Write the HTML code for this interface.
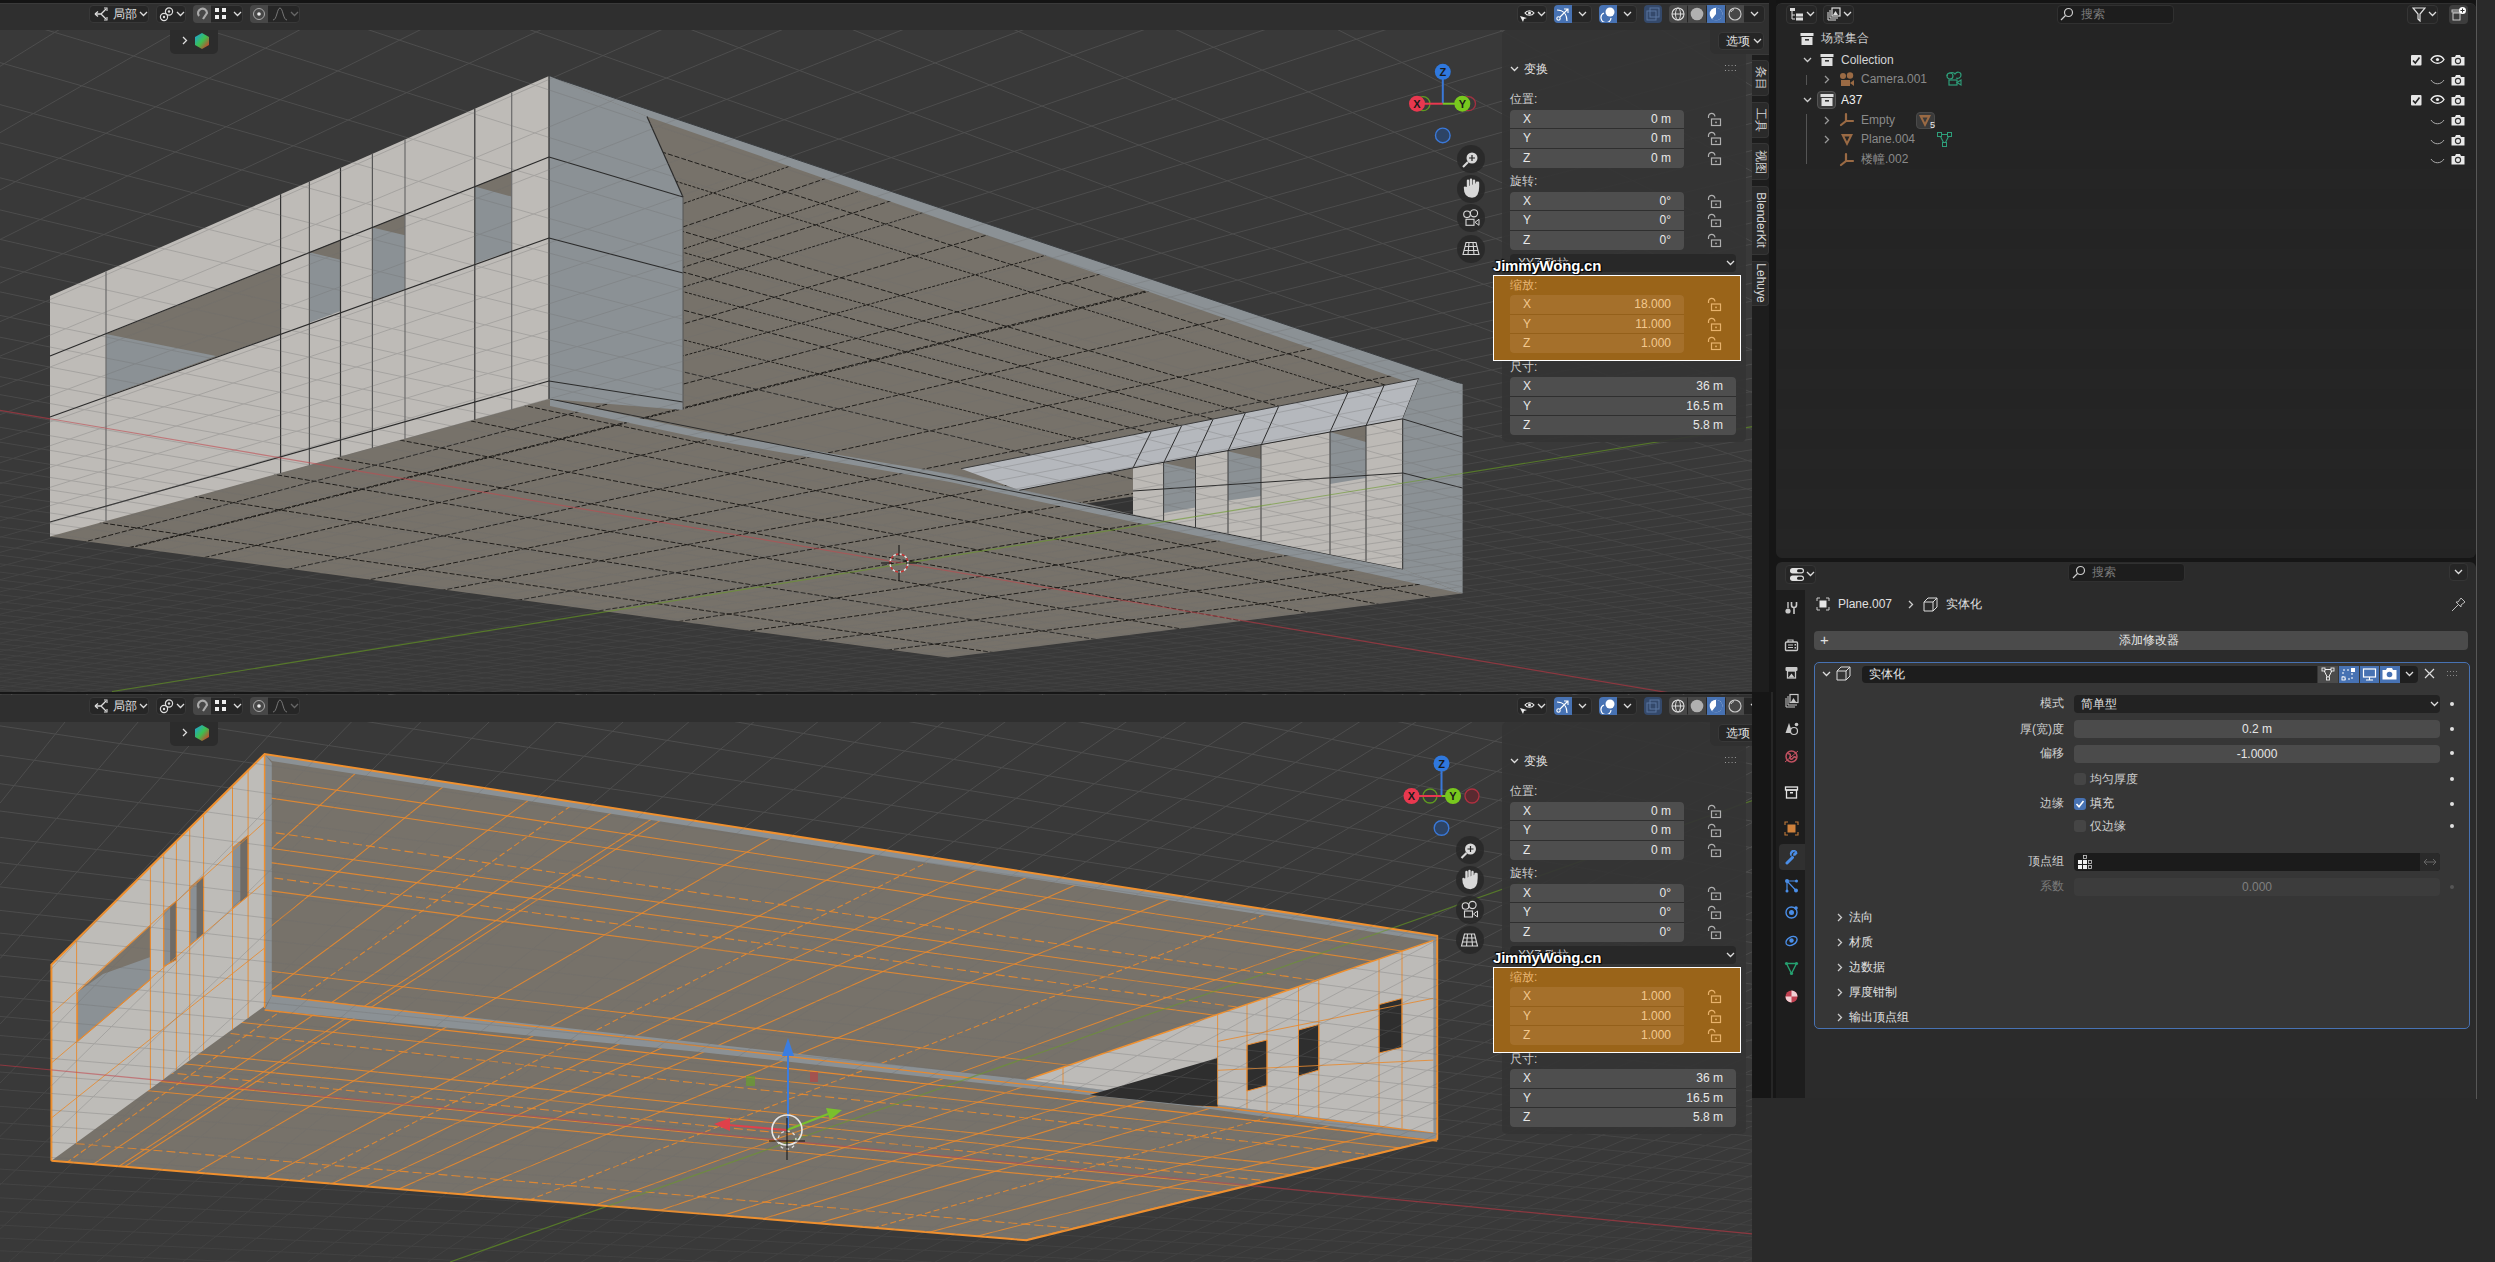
<!DOCTYPE html>
<html><head><meta charset="utf-8"><style>*{margin:0;padding:0;box-sizing:border-box}
html,body{width:2495px;height:1262px;overflow:hidden;background:#161616}
body{font-family:"Liberation Sans",sans-serif;color:#ddd;font-size:12px}
#root{position:relative;width:2495px;height:1262px;overflow:hidden}
#vtop{position:absolute;left:0;top:0;width:1771px;height:692px;overflow:hidden;border-top-right-radius:6px}
#vbot{position:absolute;left:0;top:694px;width:1752px;height:568px;overflow:hidden}
.abs{position:absolute}
.t{white-space:nowrap}
</style></head>
<body><div id="root">
<div id="vtop"><svg width="1771" height="692" viewBox="0 0 1771 692" style="position:absolute;left:0;top:0">
<defs><clipPath id="floorclipT"><polygon points="549,77 1462,384 1462,593.5 948,657.5 50,536.5"/></clipPath><clipPath id="mclipT"><polygon points="50,296 549,76 1462,384 1462,593.5 948,657.5 50,536.5"/></clipPath><linearGradient id="fadeT" x1="0" y1="0" x2="0" y2="692" gradientUnits="userSpaceOnUse"><stop offset="0" stop-color="#fff" stop-opacity="1"/><stop offset="0.45" stop-color="#fff" stop-opacity="0.9"/><stop offset="1" stop-color="#fff" stop-opacity="0.35"/></linearGradient><mask id="maskT"><rect width="1771" height="692" fill="url(#fadeT)"/></mask></defs>
<rect width="1771" height="692" fill="#393939"/>
<g mask="url(#maskT)"><line x1="106.9" y1="0.0" x2="0.0" y2="66.3" stroke="#4e4e4e" stroke-width="1" />
<line x1="231.3" y1="0.0" x2="0.0" y2="132.7" stroke="#4e4e4e" stroke-width="1" />
<line x1="355.6" y1="0.0" x2="0.0" y2="189.9" stroke="#4e4e4e" stroke-width="1" />
<line x1="480.0" y1="0.0" x2="0.0" y2="239.5" stroke="#4e4e4e" stroke-width="1" />
<line x1="604.4" y1="0.0" x2="0.0" y2="283.2" stroke="#4e4e4e" stroke-width="1" />
<line x1="728.9" y1="0.0" x2="0.0" y2="321.7" stroke="#4e4e4e" stroke-width="1" />
<line x1="853.3" y1="0.0" x2="0.0" y2="356.1" stroke="#4e4e4e" stroke-width="1" />
<line x1="977.8" y1="0.0" x2="0.0" y2="386.9" stroke="#4e4e4e" stroke-width="1" />
<line x1="1102.4" y1="0.0" x2="0.0" y2="414.7" stroke="#4e4e4e" stroke-width="1" />
<line x1="1226.9" y1="0.0" x2="0.0" y2="439.9" stroke="#4e4e4e" stroke-width="1" />
<line x1="1351.5" y1="0.0" x2="0.0" y2="462.9" stroke="#4e4e4e" stroke-width="1" />
<line x1="1476.1" y1="0.0" x2="0.0" y2="483.8" stroke="#4e4e4e" stroke-width="1" />
<line x1="1600.8" y1="0.0" x2="0.0" y2="503.1" stroke="#4e4e4e" stroke-width="1" />
<line x1="1725.4" y1="0.0" x2="0.0" y2="520.8" stroke="#4e4e4e" stroke-width="1" />
<line x1="1771.0" y1="23.0" x2="0.0" y2="537.2" stroke="#4e4e4e" stroke-width="1" />
<line x1="1771.0" y1="57.0" x2="0.0" y2="552.4" stroke="#4e4e4e" stroke-width="1" />
<line x1="1771.0" y1="88.7" x2="0.0" y2="566.5" stroke="#4e4e4e" stroke-width="1" />
<line x1="1771.0" y1="118.2" x2="0.0" y2="579.7" stroke="#4e4e4e" stroke-width="1" />
<line x1="1771.0" y1="145.7" x2="0.0" y2="591.9" stroke="#4e4e4e" stroke-width="1" />
<line x1="1771.0" y1="171.5" x2="0.0" y2="603.4" stroke="#4e4e4e" stroke-width="1" />
<line x1="1771.0" y1="195.7" x2="0.0" y2="614.2" stroke="#4e4e4e" stroke-width="1" />
<line x1="1771.0" y1="218.4" x2="0.0" y2="624.4" stroke="#4e4e4e" stroke-width="1" />
<line x1="1771.0" y1="239.8" x2="0.0" y2="633.9" stroke="#4e4e4e" stroke-width="1" />
<line x1="1771.0" y1="260.0" x2="0.0" y2="643.0" stroke="#4e4e4e" stroke-width="1" />
<line x1="1771.0" y1="279.1" x2="0.0" y2="651.5" stroke="#4e4e4e" stroke-width="1" />
<line x1="1771.0" y1="297.2" x2="0.0" y2="659.5" stroke="#4e4e4e" stroke-width="1" />
<line x1="1771.0" y1="314.3" x2="0.0" y2="667.2" stroke="#4e4e4e" stroke-width="1" />
<line x1="1771.0" y1="330.6" x2="0.0" y2="674.4" stroke="#4e4e4e" stroke-width="1" />
<line x1="1771.0" y1="346.0" x2="0.0" y2="681.3" stroke="#4e4e4e" stroke-width="1" />
<line x1="1771.0" y1="360.7" x2="0.0" y2="687.9" stroke="#4e4e4e" stroke-width="1" />
<line x1="1771.0" y1="374.8" x2="11.8" y2="692.0" stroke="#4e4e4e" stroke-width="1" />
<line x1="1771.0" y1="388.1" x2="45.9" y2="692.0" stroke="#4e4e4e" stroke-width="1" />
<line x1="1771.0" y1="400.9" x2="80.1" y2="692.0" stroke="#4e4e4e" stroke-width="1" />
<line x1="1771.0" y1="413.1" x2="114.2" y2="692.0" stroke="#4e4e4e" stroke-width="1" />
<line x1="1771.0" y1="424.8" x2="148.3" y2="692.0" stroke="#4e4e4e" stroke-width="1" />
<line x1="1771.0" y1="435.9" x2="182.5" y2="692.0" stroke="#4e4e4e" stroke-width="1" />
<line x1="1771.0" y1="446.7" x2="216.7" y2="692.0" stroke="#4e4e4e" stroke-width="1" />
<line x1="1771.0" y1="456.9" x2="250.8" y2="692.0" stroke="#4e4e4e" stroke-width="1" />
<line x1="1771.0" y1="466.8" x2="285.0" y2="692.0" stroke="#4e4e4e" stroke-width="1" />
<line x1="1771.0" y1="476.3" x2="319.2" y2="692.0" stroke="#4e4e4e" stroke-width="1" />
<line x1="1771.0" y1="485.4" x2="353.4" y2="692.0" stroke="#4e4e4e" stroke-width="1" />
<line x1="1771.0" y1="494.2" x2="387.6" y2="692.0" stroke="#4e4e4e" stroke-width="1" />
<line x1="1771.0" y1="502.7" x2="421.8" y2="692.0" stroke="#4e4e4e" stroke-width="1" />
<line x1="1771.0" y1="510.8" x2="456.0" y2="692.0" stroke="#4e4e4e" stroke-width="1" />
<line x1="1771.0" y1="518.7" x2="490.3" y2="692.0" stroke="#4e4e4e" stroke-width="1" />
<line x1="1771.0" y1="526.3" x2="524.5" y2="692.0" stroke="#4e4e4e" stroke-width="1" />
<line x1="1771.0" y1="533.6" x2="558.7" y2="692.0" stroke="#4e4e4e" stroke-width="1" />
<line x1="1771.0" y1="540.7" x2="593.0" y2="692.0" stroke="#4e4e4e" stroke-width="1" />
<line x1="1771.0" y1="547.6" x2="627.2" y2="692.0" stroke="#4e4e4e" stroke-width="1" />
<line x1="1771.0" y1="554.2" x2="661.5" y2="692.0" stroke="#4e4e4e" stroke-width="1" />
<line x1="1771.0" y1="560.6" x2="695.8" y2="692.0" stroke="#4e4e4e" stroke-width="1" />
<line x1="1771.0" y1="566.8" x2="730.0" y2="692.0" stroke="#4e4e4e" stroke-width="1" />
<line x1="1771.0" y1="572.8" x2="764.3" y2="692.0" stroke="#4e4e4e" stroke-width="1" />
<line x1="1771.0" y1="578.7" x2="798.6" y2="692.0" stroke="#4e4e4e" stroke-width="1" />
<line x1="1771.0" y1="584.3" x2="832.9" y2="692.0" stroke="#4e4e4e" stroke-width="1" />
<line x1="1771.0" y1="589.8" x2="867.2" y2="692.0" stroke="#4e4e4e" stroke-width="1" />
<line x1="1771.0" y1="595.1" x2="901.6" y2="692.0" stroke="#4e4e4e" stroke-width="1" />
<line x1="1771.0" y1="600.3" x2="935.9" y2="692.0" stroke="#4e4e4e" stroke-width="1" />
<line x1="1771.0" y1="605.3" x2="970.2" y2="692.0" stroke="#4e4e4e" stroke-width="1" />
<line x1="1771.0" y1="610.2" x2="1004.6" y2="692.0" stroke="#4e4e4e" stroke-width="1" />
<line x1="1771.0" y1="615.0" x2="1038.9" y2="692.0" stroke="#4e4e4e" stroke-width="1" />
<line x1="1771.0" y1="619.6" x2="1073.3" y2="692.0" stroke="#4e4e4e" stroke-width="1" />
<line x1="1771.0" y1="624.1" x2="1107.6" y2="692.0" stroke="#4e4e4e" stroke-width="1" />
<line x1="1771.0" y1="628.5" x2="1142.0" y2="692.0" stroke="#4e4e4e" stroke-width="1" />
<line x1="1771.0" y1="632.8" x2="1176.4" y2="692.0" stroke="#4e4e4e" stroke-width="1" />
<line x1="1771.0" y1="636.9" x2="1210.8" y2="692.0" stroke="#4e4e4e" stroke-width="1" />
<line x1="1771.0" y1="641.0" x2="1245.2" y2="692.0" stroke="#4e4e4e" stroke-width="1" />
<line x1="1771.0" y1="644.9" x2="1279.6" y2="692.0" stroke="#4e4e4e" stroke-width="1" />
<line x1="1771.0" y1="648.7" x2="1314.0" y2="692.0" stroke="#4e4e4e" stroke-width="1" />
<line x1="1771.0" y1="652.5" x2="1348.4" y2="692.0" stroke="#4e4e4e" stroke-width="1" />
<line x1="1771.0" y1="656.2" x2="1382.8" y2="692.0" stroke="#4e4e4e" stroke-width="1" />
<line x1="1771.0" y1="659.7" x2="1417.3" y2="692.0" stroke="#4e4e4e" stroke-width="1" />
<line x1="1771.0" y1="663.2" x2="1451.7" y2="692.0" stroke="#4e4e4e" stroke-width="1" />
<line x1="1771.0" y1="666.6" x2="1486.2" y2="692.0" stroke="#4e4e4e" stroke-width="1" />
<line x1="1771.0" y1="670.0" x2="1520.6" y2="692.0" stroke="#4e4e4e" stroke-width="1" />
<line x1="1771.0" y1="673.2" x2="1555.1" y2="692.0" stroke="#4e4e4e" stroke-width="1" />
<line x1="1771.0" y1="676.4" x2="1589.6" y2="692.0" stroke="#4e4e4e" stroke-width="1" />
<line x1="1771.0" y1="679.5" x2="1624.1" y2="692.0" stroke="#4e4e4e" stroke-width="1" />
<line x1="1771.0" y1="682.5" x2="1658.6" y2="692.0" stroke="#4e4e4e" stroke-width="1" />
<line x1="1771.0" y1="685.5" x2="1693.1" y2="692.0" stroke="#4e4e4e" stroke-width="1" />
<line x1="1771.0" y1="688.4" x2="1727.6" y2="692.0" stroke="#4e4e4e" stroke-width="1" />
<line x1="1771.0" y1="691.3" x2="1762.1" y2="692.0" stroke="#4e4e4e" stroke-width="1" />
<line x1="1613.8" y1="0.0" x2="1771.0" y2="98.0" stroke="#4e4e4e" stroke-width="1" />
<line x1="1446.8" y1="0.0" x2="1771.0" y2="182.2" stroke="#4e4e4e" stroke-width="1" />
<line x1="1279.8" y1="0.0" x2="1771.0" y2="251.4" stroke="#4e4e4e" stroke-width="1" />
<line x1="1112.9" y1="0.0" x2="1771.0" y2="309.2" stroke="#4e4e4e" stroke-width="1" />
<line x1="946.0" y1="0.0" x2="1771.0" y2="358.2" stroke="#4e4e4e" stroke-width="1" />
<line x1="779.2" y1="0.0" x2="1771.0" y2="400.2" stroke="#4e4e4e" stroke-width="1" />
<line x1="612.5" y1="0.0" x2="1771.0" y2="436.8" stroke="#4e4e4e" stroke-width="1" />
<line x1="445.8" y1="0.0" x2="1771.0" y2="468.8" stroke="#4e4e4e" stroke-width="1" />
<line x1="279.1" y1="0.0" x2="1771.0" y2="497.1" stroke="#4e4e4e" stroke-width="1" />
<line x1="112.5" y1="0.0" x2="1771.0" y2="522.2" stroke="#4e4e4e" stroke-width="1" />
<line x1="0.0" y1="16.1" x2="1771.0" y2="544.8" stroke="#4e4e4e" stroke-width="1" />
<line x1="0.0" y1="62.6" x2="1771.0" y2="565.1" stroke="#4e4e4e" stroke-width="1" />
<line x1="0.0" y1="104.6" x2="1771.0" y2="583.4" stroke="#4e4e4e" stroke-width="1" />
<line x1="0.0" y1="142.9" x2="1771.0" y2="600.2" stroke="#4e4e4e" stroke-width="1" />
<line x1="0.0" y1="177.8" x2="1771.0" y2="615.5" stroke="#4e4e4e" stroke-width="1" />
<line x1="0.0" y1="209.9" x2="1771.0" y2="629.5" stroke="#4e4e4e" stroke-width="1" />
<line x1="0.0" y1="239.4" x2="1771.0" y2="642.4" stroke="#4e4e4e" stroke-width="1" />
<line x1="0.0" y1="266.7" x2="1771.0" y2="654.3" stroke="#4e4e4e" stroke-width="1" />
<line x1="0.0" y1="291.9" x2="1771.0" y2="665.3" stroke="#4e4e4e" stroke-width="1" />
<line x1="0.0" y1="315.4" x2="1771.0" y2="675.6" stroke="#4e4e4e" stroke-width="1" />
<line x1="0.0" y1="337.2" x2="1771.0" y2="685.1" stroke="#4e4e4e" stroke-width="1" />
<line x1="0.0" y1="357.6" x2="1760.2" y2="692.0" stroke="#4e4e4e" stroke-width="1" />
<line x1="0.0" y1="376.7" x2="1714.5" y2="692.0" stroke="#4e4e4e" stroke-width="1" />
<line x1="0.0" y1="394.6" x2="1668.8" y2="692.0" stroke="#4e4e4e" stroke-width="1" />
<line x1="0.0" y1="411.5" x2="1623.0" y2="692.0" stroke="#4e4e4e" stroke-width="1" />
<line x1="0.0" y1="427.3" x2="1577.3" y2="692.0" stroke="#4e4e4e" stroke-width="1" />
<line x1="0.0" y1="442.2" x2="1531.7" y2="692.0" stroke="#4e4e4e" stroke-width="1" />
<line x1="0.0" y1="456.4" x2="1486.0" y2="692.0" stroke="#4e4e4e" stroke-width="1" />
<line x1="0.0" y1="469.7" x2="1440.3" y2="692.0" stroke="#4e4e4e" stroke-width="1" />
<line x1="0.0" y1="482.4" x2="1394.7" y2="692.0" stroke="#4e4e4e" stroke-width="1" />
<line x1="0.0" y1="494.4" x2="1349.1" y2="692.0" stroke="#4e4e4e" stroke-width="1" />
<line x1="0.0" y1="505.8" x2="1303.5" y2="692.0" stroke="#4e4e4e" stroke-width="1" />
<line x1="0.0" y1="516.6" x2="1257.9" y2="692.0" stroke="#4e4e4e" stroke-width="1" />
<line x1="0.0" y1="527.0" x2="1212.3" y2="692.0" stroke="#4e4e4e" stroke-width="1" />
<line x1="0.0" y1="536.8" x2="1166.7" y2="692.0" stroke="#4e4e4e" stroke-width="1" />
<line x1="0.0" y1="546.2" x2="1121.1" y2="692.0" stroke="#4e4e4e" stroke-width="1" />
<line x1="0.0" y1="555.2" x2="1075.6" y2="692.0" stroke="#4e4e4e" stroke-width="1" />
<line x1="0.0" y1="563.8" x2="1030.1" y2="692.0" stroke="#4e4e4e" stroke-width="1" />
<line x1="0.0" y1="572.1" x2="984.5" y2="692.0" stroke="#4e4e4e" stroke-width="1" />
<line x1="0.0" y1="580.0" x2="939.0" y2="692.0" stroke="#4e4e4e" stroke-width="1" />
<line x1="0.0" y1="587.6" x2="893.5" y2="692.0" stroke="#4e4e4e" stroke-width="1" />
<line x1="0.0" y1="594.8" x2="848.1" y2="692.0" stroke="#4e4e4e" stroke-width="1" />
<line x1="0.0" y1="601.8" x2="802.6" y2="692.0" stroke="#4e4e4e" stroke-width="1" />
<line x1="0.0" y1="608.6" x2="757.1" y2="692.0" stroke="#4e4e4e" stroke-width="1" />
<line x1="0.0" y1="615.0" x2="711.7" y2="692.0" stroke="#4e4e4e" stroke-width="1" />
<line x1="0.0" y1="621.3" x2="666.3" y2="692.0" stroke="#4e4e4e" stroke-width="1" />
<line x1="0.0" y1="627.3" x2="620.9" y2="692.0" stroke="#4e4e4e" stroke-width="1" />
<line x1="0.0" y1="633.1" x2="575.5" y2="692.0" stroke="#4e4e4e" stroke-width="1" />
<line x1="0.0" y1="638.7" x2="530.1" y2="692.0" stroke="#4e4e4e" stroke-width="1" />
<line x1="0.0" y1="644.0" x2="484.7" y2="692.0" stroke="#4e4e4e" stroke-width="1" />
<line x1="0.0" y1="649.3" x2="439.4" y2="692.0" stroke="#4e4e4e" stroke-width="1" />
<line x1="0.0" y1="654.3" x2="394.0" y2="692.0" stroke="#4e4e4e" stroke-width="1" />
<line x1="0.0" y1="659.2" x2="348.7" y2="692.0" stroke="#4e4e4e" stroke-width="1" />
<line x1="0.0" y1="663.9" x2="303.4" y2="692.0" stroke="#4e4e4e" stroke-width="1" />
<line x1="0.0" y1="668.5" x2="258.1" y2="692.0" stroke="#4e4e4e" stroke-width="1" />
<line x1="0.0" y1="672.9" x2="212.8" y2="692.0" stroke="#4e4e4e" stroke-width="1" />
<line x1="0.0" y1="677.2" x2="167.5" y2="692.0" stroke="#4e4e4e" stroke-width="1" />
<line x1="0.0" y1="681.4" x2="122.3" y2="692.0" stroke="#4e4e4e" stroke-width="1" />
<line x1="0.0" y1="685.4" x2="77.0" y2="692.0" stroke="#4e4e4e" stroke-width="1" />
<line x1="0.0" y1="689.3" x2="31.8" y2="692.0" stroke="#4e4e4e" stroke-width="1" /></g>
<line x1="0.0" y1="410.3" x2="1771.0" y2="710.1" stroke="#8c3840" stroke-width="1.2" />
<line x1="112.0" y1="691.5" x2="1771.0" y2="423.6" stroke="#56782a" stroke-width="1.2" />
<polygon points="549.0,77.0 1462.0,384.0 1462.0,593.5 948.0,657.5 50.0,536.5" fill="#77726a" />
<g clip-path="url(#floorclipT)" fill="none">
<line x1="1752.0" y1="503.3" x2="190.2" y2="0.0" stroke="#1f1d1a" stroke-width="1" stroke-dasharray="5 2"/>
<line x1="1752.0" y1="517.6" x2="95.8" y2="0.0" stroke="#1f1d1a" stroke-width="1" stroke-dasharray="3 1.5"/>
<line x1="1752.0" y1="545.3" x2="0.0" y2="30.9" stroke="#1f1d1a" stroke-width="1" stroke-dasharray="5 2"/>
<line x1="1752.0" y1="557.4" x2="0.0" y2="57.4" stroke="#1f1d1a" stroke-width="1" stroke-dasharray="3 1.5"/>
<line x1="1752.0" y1="568.8" x2="0.0" y2="82.4" stroke="#1f1d1a" stroke-width="1" stroke-dasharray="5 2"/>
<line x1="1752.0" y1="580.1" x2="0.0" y2="107.3" stroke="#1f1d1a" stroke-width="1" stroke-dasharray="3 1.5"/>
<line x1="1752.0" y1="590.8" x2="0.0" y2="130.7" stroke="#1f1d1a" stroke-width="1" stroke-dasharray="5 2"/>
<line x1="1752.0" y1="608.0" x2="0.0" y2="168.5" stroke="#1f1d1a" stroke-width="1" stroke-dasharray="3 1.5"/>
<line x1="1752.0" y1="626.5" x2="0.0" y2="209.1" stroke="#1f1d1a" stroke-width="1" stroke-dasharray="5 2"/>
<line x1="1265.0" y1="692.0" x2="0.0" y2="508.1" stroke="#1f1d1a" stroke-width="1" stroke-dasharray="5 2"/>
<line x1="1427.8" y1="692.0" x2="0.0" y2="465.6" stroke="#1f1d1a" stroke-width="1" stroke-dasharray="5 2"/>
<line x1="1551.8" y1="692.0" x2="0.0" y2="427.7" stroke="#1f1d1a" stroke-width="1" stroke-dasharray="5 2"/>
<line x1="1637.8" y1="692.0" x2="0.0" y2="397.8" stroke="#1f1d1a" stroke-width="1" stroke-dasharray="5 2"/>
<line x1="1725.1" y1="692.0" x2="0.0" y2="364.1" stroke="#1f1d1a" stroke-width="1" stroke-dasharray="5 2"/>
<line x1="1752.0" y1="679.7" x2="0.0" y2="325.9" stroke="#1f1d1a" stroke-width="1" stroke-dasharray="5 2"/>
<line x1="1752.0" y1="665.4" x2="0.0" y2="294.5" stroke="#1f1d1a" stroke-width="1" stroke-dasharray="5 2"/>
<line x1="0.0" y1="443.2" x2="1263.6" y2="0.0" stroke="#1f1d1a" stroke-width="1" stroke-dasharray="3 1.5"/>
<line x1="0.0" y1="458.8" x2="1351.4" y2="0.0" stroke="#1f1d1a" stroke-width="1" stroke-dasharray="5 2"/>
<line x1="0.0" y1="473.6" x2="1440.2" y2="0.0" stroke="#1f1d1a" stroke-width="1" stroke-dasharray="3 1.5"/>
<line x1="0.0" y1="485.9" x2="1518.7" y2="0.0" stroke="#1f1d1a" stroke-width="1" stroke-dasharray="5 2"/>
<line x1="0.0" y1="499.1" x2="1607.7" y2="0.0" stroke="#1f1d1a" stroke-width="1" stroke-dasharray="3 1.5"/>
<line x1="0.0" y1="523.9" x2="1752.0" y2="11.1" stroke="#1f1d1a" stroke-width="1" stroke-dasharray="5 2"/>
<line x1="0.0" y1="545.3" x2="1752.0" y2="59.4" stroke="#1f1d1a" stroke-width="1" stroke-dasharray="3 1.5"/>
<line x1="0.0" y1="564.2" x2="1752.0" y2="102.3" stroke="#1f1d1a" stroke-width="1" stroke-dasharray="5 2"/>
<line x1="0.0" y1="580.7" x2="1752.0" y2="139.4" stroke="#1f1d1a" stroke-width="1" stroke-dasharray="3 1.5"/>
<line x1="0.0" y1="580.1" x2="1752.0" y2="138.1" stroke="#1f1d1a" stroke-width="1" stroke-dasharray="5 2"/>
<line x1="0.0" y1="605.4" x2="1752.0" y2="195.2" stroke="#1f1d1a" stroke-width="1" stroke-dasharray="5 2"/>
<line x1="0.0" y1="631.3" x2="1752.0" y2="253.8" stroke="#1f1d1a" stroke-width="1" stroke-dasharray="5 2"/>
<line x1="0.0" y1="653.4" x2="1752.0" y2="303.8" stroke="#1f1d1a" stroke-width="1" stroke-dasharray="5 2"/>
<line x1="0.0" y1="672.4" x2="1752.0" y2="346.7" stroke="#1f1d1a" stroke-width="1" stroke-dasharray="5 2"/>
<line x1="0.0" y1="689.9" x2="1752.0" y2="386.3" stroke="#1f1d1a" stroke-width="1" stroke-dasharray="5 2"/>
<line x1="94.1" y1="692.0" x2="1752.0" y2="425.2" stroke="#1f1d1a" stroke-width="1" stroke-dasharray="5 2"/>
<line x1="207.5" y1="692.0" x2="1752.0" y2="461.1" stroke="#1f1d1a" stroke-width="1" stroke-dasharray="5 2"/>
<line x1="313.5" y1="692.0" x2="1752.0" y2="490.3" stroke="#1f1d1a" stroke-width="1" stroke-dasharray="5 2"/>
<line x1="426.3" y1="692.0" x2="1752.0" y2="517.6" stroke="#1f1d1a" stroke-width="1" stroke-dasharray="5 2"/>
<line x1="546.6" y1="692.0" x2="1752.0" y2="543.3" stroke="#1f1d1a" stroke-width="1" stroke-dasharray="5 2"/>
</g>
<polygon points="549.0,76.0 1462.0,384.0 1462.0,391.0 1419.0,386.0 647.0,116.5" fill="#8b9195" />
<line x1="549.0" y1="76.0" x2="1462.0" y2="384.0" stroke="#3a3d40" stroke-width="1" />
<polygon points="550.0,399.0 700.0,431.0 950.0,474.0 1133.0,514.5 1403.0,569.0 1462.0,593.5 1427.0,586.0 950.0,482.0 700.0,438.0 550.0,406.0" fill="#8b9195" />
<line x1="550.0" y1="399.0" x2="1403.0" y2="569.0" stroke="#2b2b2b" stroke-width="1" />
<polygon points="50.0,296.0 549.0,76.0 549.0,399.0 50.0,536.5" fill="#bebbb7" />
<polygon points="106.0,334.0 281.0,264.0 281.0,334.0 106.0,396.0" fill="#77726a" />
<polygon points="106.0,334.0 216.0,356.0 106.0,396.0" fill="#8b9195" />
<polygon points="309.4,252.3 340.5,240.0 340.5,311.0 309.4,322.7" fill="#8b9195" />
<polygon points="309.4,252.3 340.5,240.0 340.5,259.7" fill="#77726a" />
<polygon points="372.4,227.4 405.0,214.2 405.0,289.0 372.4,300.7" fill="#8b9195" />
<polygon points="372.4,227.4 405.0,214.2 405.0,235.3" fill="#77726a" />
<polygon points="474.8,186.4 511.7,171.7 511.7,250.9 474.8,263.5" fill="#8b9195" />
<polygon points="474.8,186.4 511.7,171.7 511.7,196.6" fill="#77726a" />
<line x1="106.0" y1="271.3" x2="106.0" y2="521.1" stroke="#6a6a6a" stroke-width="1.2" />
<line x1="280.6" y1="194.3" x2="280.6" y2="473.2" stroke="#333" stroke-width="1.2" />
<line x1="309.4" y1="181.6" x2="309.4" y2="465.3" stroke="#555" stroke-width="1.2" />
<line x1="340.5" y1="167.9" x2="340.5" y2="456.8" stroke="#333" stroke-width="1.2" />
<line x1="372.4" y1="153.9" x2="372.4" y2="448.0" stroke="#555" stroke-width="1.2" />
<line x1="405.0" y1="139.5" x2="405.0" y2="439.1" stroke="#6a6a6a" stroke-width="1.2" />
<line x1="474.8" y1="108.7" x2="474.8" y2="419.9" stroke="#333" stroke-width="1.2" />
<line x1="511.7" y1="92.4" x2="511.7" y2="409.8" stroke="#6a6a6a" stroke-width="1.2" />
<line x1="50.0" y1="356.0" x2="549.0" y2="157.0" stroke="#2b2b2b" stroke-width="1.2" />
<line x1="50.0" y1="417.0" x2="549.0" y2="238.0" stroke="#2b2b2b" stroke-width="1.2" />
<line x1="50.0" y1="522.0" x2="549.0" y2="381.0" stroke="#2b2b2b" stroke-width="1.2" />
<polygon points="549.0,76.0 647.0,116.5 683.0,197.0 683.0,410.0 549.0,399.0" fill="#8b9195" />
<line x1="549.0" y1="157.0" x2="683.0" y2="197.0" stroke="#2b2b2b" stroke-width="1.1" />
<line x1="549.0" y1="238.0" x2="683.0" y2="273.0" stroke="#2b2b2b" stroke-width="1.1" />
<line x1="549.0" y1="381.0" x2="683.0" y2="402.0" stroke="#2b2b2b" stroke-width="1.1" />
<line x1="549.0" y1="76.0" x2="549.0" y2="399.0" stroke="#2b2b2b" stroke-width="1.2" />
<line x1="647.0" y1="116.5" x2="683.0" y2="197.0" stroke="#2b2b2b" stroke-width="1.2" />
<line x1="683.0" y1="197.0" x2="683.0" y2="410.0" stroke="#555" stroke-width="1" />
<polygon points="1086.0,503.4 1133.0,496.4 1133.0,514.5" fill="#333333" />
<polygon points="1133.0,468.0 1403.0,419.0 1403.0,569.0 1133.0,514.5" fill="#bdbab6" />
<polygon points="1163.6,463.0 1195.5,457.0 1195.5,507.5 1163.6,513.0" fill="#8b9195" />
<polygon points="1163.6,463.0 1195.5,457.0 1195.5,470.0" fill="#77726a" />
<polygon points="1228.0,451.2 1261.0,445.1 1261.0,496.0 1228.0,500.6" fill="#8b9195" />
<polygon points="1228.0,451.2 1261.0,445.1 1261.0,459.0" fill="#77726a" />
<polygon points="1330.0,432.0 1366.0,425.7 1366.0,478.0 1330.0,484.0" fill="#8b9195" />
<polygon points="1330.0,432.0 1366.0,425.7 1366.0,442.0" fill="#77726a" />
<line x1="1163.6" y1="462.4" x2="1163.6" y2="520.7" stroke="#3a3a3a" stroke-width="1" />
<line x1="1195.5" y1="456.7" x2="1195.5" y2="527.1" stroke="#3a3a3a" stroke-width="1" />
<line x1="1228.0" y1="450.8" x2="1228.0" y2="533.7" stroke="#3a3a3a" stroke-width="1" />
<line x1="1261.0" y1="444.8" x2="1261.0" y2="540.3" stroke="#3a3a3a" stroke-width="1" />
<line x1="1330.0" y1="432.2" x2="1330.0" y2="554.3" stroke="#3a3a3a" stroke-width="1" />
<line x1="1366.0" y1="425.7" x2="1366.0" y2="561.5" stroke="#3a3a3a" stroke-width="1" />
<line x1="1133.0" y1="491.0" x2="1403.0" y2="473.0" stroke="#2b2b2b" stroke-width="1" />
<polygon points="961.0,468.7 1418.8,378.5 1402.7,418.8 1133.0,467.9 1019.3,490.3" fill="#b5b8bd" />
<line x1="1151.0" y1="432.0" x2="1133.0" y2="467.9" stroke="#2b2b2b" stroke-width="1" />
<line x1="1181.6" y1="425.7" x2="1163.6" y2="463.0" stroke="#2b2b2b" stroke-width="1" />
<line x1="1213.0" y1="419.3" x2="1195.5" y2="457.0" stroke="#2b2b2b" stroke-width="1" />
<line x1="1245.4" y1="412.7" x2="1228.0" y2="451.2" stroke="#2b2b2b" stroke-width="1" />
<line x1="1278.7" y1="406.3" x2="1261.2" y2="445.1" stroke="#2b2b2b" stroke-width="1" />
<line x1="1348.0" y1="392.4" x2="1330.0" y2="432.0" stroke="#2b2b2b" stroke-width="1" />
<line x1="1384.0" y1="385.5" x2="1366.0" y2="425.7" stroke="#2b2b2b" stroke-width="1" />
<line x1="1418.8" y1="378.5" x2="1402.7" y2="418.8" stroke="#2b2b2b" stroke-width="1" />
<line x1="961.0" y1="468.7" x2="1418.8" y2="378.5" stroke="#3a3a3a" stroke-width="1" />
<line x1="1019.3" y1="490.3" x2="1133.0" y2="467.9" stroke="#2b2b2b" stroke-width="1" />
<line x1="1133.0" y1="467.9" x2="1402.7" y2="418.8" stroke="#2b2b2b" stroke-width="1" />
<polygon points="1402.7,418.8 1418.8,378.5 1462.6,384.0 1462.6,593.5 1402.7,569.0" fill="#8b9195" />
<line x1="1402.7" y1="418.8" x2="1402.7" y2="569.0" stroke="#2b2b2b" stroke-width="1" />
<line x1="1403.0" y1="473.0" x2="1462.6" y2="488.0" stroke="#2b2b2b" stroke-width="1" />
<line x1="1403.0" y1="419.0" x2="1462.6" y2="437.0" stroke="#2b2b2b" stroke-width="1" />
<g clip-path="url(#mclipT)" opacity="0.3"><line x1="106.9" y1="0.0" x2="0.0" y2="66.3" stroke="#6e6e6e" stroke-width="1" />
<line x1="231.3" y1="0.0" x2="0.0" y2="132.7" stroke="#6e6e6e" stroke-width="1" />
<line x1="355.6" y1="0.0" x2="0.0" y2="189.9" stroke="#6e6e6e" stroke-width="1" />
<line x1="480.0" y1="0.0" x2="0.0" y2="239.5" stroke="#6e6e6e" stroke-width="1" />
<line x1="604.4" y1="0.0" x2="0.0" y2="283.2" stroke="#6e6e6e" stroke-width="1" />
<line x1="728.9" y1="0.0" x2="0.0" y2="321.7" stroke="#6e6e6e" stroke-width="1" />
<line x1="853.3" y1="0.0" x2="0.0" y2="356.1" stroke="#6e6e6e" stroke-width="1" />
<line x1="977.8" y1="0.0" x2="0.0" y2="386.9" stroke="#6e6e6e" stroke-width="1" />
<line x1="1102.4" y1="0.0" x2="0.0" y2="414.7" stroke="#6e6e6e" stroke-width="1" />
<line x1="1226.9" y1="0.0" x2="0.0" y2="439.9" stroke="#6e6e6e" stroke-width="1" />
<line x1="1351.5" y1="0.0" x2="0.0" y2="462.9" stroke="#6e6e6e" stroke-width="1" />
<line x1="1476.1" y1="0.0" x2="0.0" y2="483.8" stroke="#6e6e6e" stroke-width="1" />
<line x1="1600.8" y1="0.0" x2="0.0" y2="503.1" stroke="#6e6e6e" stroke-width="1" />
<line x1="1725.4" y1="0.0" x2="0.0" y2="520.8" stroke="#6e6e6e" stroke-width="1" />
<line x1="1771.0" y1="23.0" x2="0.0" y2="537.2" stroke="#6e6e6e" stroke-width="1" />
<line x1="1771.0" y1="57.0" x2="0.0" y2="552.4" stroke="#6e6e6e" stroke-width="1" />
<line x1="1771.0" y1="88.7" x2="0.0" y2="566.5" stroke="#6e6e6e" stroke-width="1" />
<line x1="1771.0" y1="118.2" x2="0.0" y2="579.7" stroke="#6e6e6e" stroke-width="1" />
<line x1="1771.0" y1="145.7" x2="0.0" y2="591.9" stroke="#6e6e6e" stroke-width="1" />
<line x1="1771.0" y1="171.5" x2="0.0" y2="603.4" stroke="#6e6e6e" stroke-width="1" />
<line x1="1771.0" y1="195.7" x2="0.0" y2="614.2" stroke="#6e6e6e" stroke-width="1" />
<line x1="1771.0" y1="218.4" x2="0.0" y2="624.4" stroke="#6e6e6e" stroke-width="1" />
<line x1="1771.0" y1="239.8" x2="0.0" y2="633.9" stroke="#6e6e6e" stroke-width="1" />
<line x1="1771.0" y1="260.0" x2="0.0" y2="643.0" stroke="#6e6e6e" stroke-width="1" />
<line x1="1771.0" y1="279.1" x2="0.0" y2="651.5" stroke="#6e6e6e" stroke-width="1" />
<line x1="1771.0" y1="297.2" x2="0.0" y2="659.5" stroke="#6e6e6e" stroke-width="1" />
<line x1="1771.0" y1="314.3" x2="0.0" y2="667.2" stroke="#6e6e6e" stroke-width="1" />
<line x1="1771.0" y1="330.6" x2="0.0" y2="674.4" stroke="#6e6e6e" stroke-width="1" />
<line x1="1771.0" y1="346.0" x2="0.0" y2="681.3" stroke="#6e6e6e" stroke-width="1" />
<line x1="1771.0" y1="360.7" x2="0.0" y2="687.9" stroke="#6e6e6e" stroke-width="1" />
<line x1="1771.0" y1="374.8" x2="11.8" y2="692.0" stroke="#6e6e6e" stroke-width="1" />
<line x1="1771.0" y1="388.1" x2="45.9" y2="692.0" stroke="#6e6e6e" stroke-width="1" />
<line x1="1771.0" y1="400.9" x2="80.1" y2="692.0" stroke="#6e6e6e" stroke-width="1" />
<line x1="1771.0" y1="413.1" x2="114.2" y2="692.0" stroke="#6e6e6e" stroke-width="1" />
<line x1="1771.0" y1="424.8" x2="148.3" y2="692.0" stroke="#6e6e6e" stroke-width="1" />
<line x1="1771.0" y1="435.9" x2="182.5" y2="692.0" stroke="#6e6e6e" stroke-width="1" />
<line x1="1771.0" y1="446.7" x2="216.7" y2="692.0" stroke="#6e6e6e" stroke-width="1" />
<line x1="1771.0" y1="456.9" x2="250.8" y2="692.0" stroke="#6e6e6e" stroke-width="1" />
<line x1="1771.0" y1="466.8" x2="285.0" y2="692.0" stroke="#6e6e6e" stroke-width="1" />
<line x1="1771.0" y1="476.3" x2="319.2" y2="692.0" stroke="#6e6e6e" stroke-width="1" />
<line x1="1771.0" y1="485.4" x2="353.4" y2="692.0" stroke="#6e6e6e" stroke-width="1" />
<line x1="1771.0" y1="494.2" x2="387.6" y2="692.0" stroke="#6e6e6e" stroke-width="1" />
<line x1="1771.0" y1="502.7" x2="421.8" y2="692.0" stroke="#6e6e6e" stroke-width="1" />
<line x1="1771.0" y1="510.8" x2="456.0" y2="692.0" stroke="#6e6e6e" stroke-width="1" />
<line x1="1771.0" y1="518.7" x2="490.3" y2="692.0" stroke="#6e6e6e" stroke-width="1" />
<line x1="1771.0" y1="526.3" x2="524.5" y2="692.0" stroke="#6e6e6e" stroke-width="1" />
<line x1="1771.0" y1="533.6" x2="558.7" y2="692.0" stroke="#6e6e6e" stroke-width="1" />
<line x1="1771.0" y1="540.7" x2="593.0" y2="692.0" stroke="#6e6e6e" stroke-width="1" />
<line x1="1771.0" y1="547.6" x2="627.2" y2="692.0" stroke="#6e6e6e" stroke-width="1" />
<line x1="1771.0" y1="554.2" x2="661.5" y2="692.0" stroke="#6e6e6e" stroke-width="1" />
<line x1="1771.0" y1="560.6" x2="695.8" y2="692.0" stroke="#6e6e6e" stroke-width="1" />
<line x1="1771.0" y1="566.8" x2="730.0" y2="692.0" stroke="#6e6e6e" stroke-width="1" />
<line x1="1771.0" y1="572.8" x2="764.3" y2="692.0" stroke="#6e6e6e" stroke-width="1" />
<line x1="1771.0" y1="578.7" x2="798.6" y2="692.0" stroke="#6e6e6e" stroke-width="1" />
<line x1="1771.0" y1="584.3" x2="832.9" y2="692.0" stroke="#6e6e6e" stroke-width="1" />
<line x1="1771.0" y1="589.8" x2="867.2" y2="692.0" stroke="#6e6e6e" stroke-width="1" />
<line x1="1771.0" y1="595.1" x2="901.6" y2="692.0" stroke="#6e6e6e" stroke-width="1" />
<line x1="1771.0" y1="600.3" x2="935.9" y2="692.0" stroke="#6e6e6e" stroke-width="1" />
<line x1="1771.0" y1="605.3" x2="970.2" y2="692.0" stroke="#6e6e6e" stroke-width="1" />
<line x1="1771.0" y1="610.2" x2="1004.6" y2="692.0" stroke="#6e6e6e" stroke-width="1" />
<line x1="1771.0" y1="615.0" x2="1038.9" y2="692.0" stroke="#6e6e6e" stroke-width="1" />
<line x1="1771.0" y1="619.6" x2="1073.3" y2="692.0" stroke="#6e6e6e" stroke-width="1" />
<line x1="1771.0" y1="624.1" x2="1107.6" y2="692.0" stroke="#6e6e6e" stroke-width="1" />
<line x1="1771.0" y1="628.5" x2="1142.0" y2="692.0" stroke="#6e6e6e" stroke-width="1" />
<line x1="1771.0" y1="632.8" x2="1176.4" y2="692.0" stroke="#6e6e6e" stroke-width="1" />
<line x1="1771.0" y1="636.9" x2="1210.8" y2="692.0" stroke="#6e6e6e" stroke-width="1" />
<line x1="1771.0" y1="641.0" x2="1245.2" y2="692.0" stroke="#6e6e6e" stroke-width="1" />
<line x1="1771.0" y1="644.9" x2="1279.6" y2="692.0" stroke="#6e6e6e" stroke-width="1" />
<line x1="1771.0" y1="648.7" x2="1314.0" y2="692.0" stroke="#6e6e6e" stroke-width="1" />
<line x1="1771.0" y1="652.5" x2="1348.4" y2="692.0" stroke="#6e6e6e" stroke-width="1" />
<line x1="1771.0" y1="656.2" x2="1382.8" y2="692.0" stroke="#6e6e6e" stroke-width="1" />
<line x1="1771.0" y1="659.7" x2="1417.3" y2="692.0" stroke="#6e6e6e" stroke-width="1" />
<line x1="1771.0" y1="663.2" x2="1451.7" y2="692.0" stroke="#6e6e6e" stroke-width="1" />
<line x1="1771.0" y1="666.6" x2="1486.2" y2="692.0" stroke="#6e6e6e" stroke-width="1" />
<line x1="1771.0" y1="670.0" x2="1520.6" y2="692.0" stroke="#6e6e6e" stroke-width="1" />
<line x1="1771.0" y1="673.2" x2="1555.1" y2="692.0" stroke="#6e6e6e" stroke-width="1" />
<line x1="1771.0" y1="676.4" x2="1589.6" y2="692.0" stroke="#6e6e6e" stroke-width="1" />
<line x1="1771.0" y1="679.5" x2="1624.1" y2="692.0" stroke="#6e6e6e" stroke-width="1" />
<line x1="1771.0" y1="682.5" x2="1658.6" y2="692.0" stroke="#6e6e6e" stroke-width="1" />
<line x1="1771.0" y1="685.5" x2="1693.1" y2="692.0" stroke="#6e6e6e" stroke-width="1" />
<line x1="1771.0" y1="688.4" x2="1727.6" y2="692.0" stroke="#6e6e6e" stroke-width="1" />
<line x1="1771.0" y1="691.3" x2="1762.1" y2="692.0" stroke="#6e6e6e" stroke-width="1" />
<line x1="1613.8" y1="0.0" x2="1771.0" y2="98.0" stroke="#6e6e6e" stroke-width="1" />
<line x1="1446.8" y1="0.0" x2="1771.0" y2="182.2" stroke="#6e6e6e" stroke-width="1" />
<line x1="1279.8" y1="0.0" x2="1771.0" y2="251.4" stroke="#6e6e6e" stroke-width="1" />
<line x1="1112.9" y1="0.0" x2="1771.0" y2="309.2" stroke="#6e6e6e" stroke-width="1" />
<line x1="946.0" y1="0.0" x2="1771.0" y2="358.2" stroke="#6e6e6e" stroke-width="1" />
<line x1="779.2" y1="0.0" x2="1771.0" y2="400.2" stroke="#6e6e6e" stroke-width="1" />
<line x1="612.5" y1="0.0" x2="1771.0" y2="436.8" stroke="#6e6e6e" stroke-width="1" />
<line x1="445.8" y1="0.0" x2="1771.0" y2="468.8" stroke="#6e6e6e" stroke-width="1" />
<line x1="279.1" y1="0.0" x2="1771.0" y2="497.1" stroke="#6e6e6e" stroke-width="1" />
<line x1="112.5" y1="0.0" x2="1771.0" y2="522.2" stroke="#6e6e6e" stroke-width="1" />
<line x1="0.0" y1="16.1" x2="1771.0" y2="544.8" stroke="#6e6e6e" stroke-width="1" />
<line x1="0.0" y1="62.6" x2="1771.0" y2="565.1" stroke="#6e6e6e" stroke-width="1" />
<line x1="0.0" y1="104.6" x2="1771.0" y2="583.4" stroke="#6e6e6e" stroke-width="1" />
<line x1="0.0" y1="142.9" x2="1771.0" y2="600.2" stroke="#6e6e6e" stroke-width="1" />
<line x1="0.0" y1="177.8" x2="1771.0" y2="615.5" stroke="#6e6e6e" stroke-width="1" />
<line x1="0.0" y1="209.9" x2="1771.0" y2="629.5" stroke="#6e6e6e" stroke-width="1" />
<line x1="0.0" y1="239.4" x2="1771.0" y2="642.4" stroke="#6e6e6e" stroke-width="1" />
<line x1="0.0" y1="266.7" x2="1771.0" y2="654.3" stroke="#6e6e6e" stroke-width="1" />
<line x1="0.0" y1="291.9" x2="1771.0" y2="665.3" stroke="#6e6e6e" stroke-width="1" />
<line x1="0.0" y1="315.4" x2="1771.0" y2="675.6" stroke="#6e6e6e" stroke-width="1" />
<line x1="0.0" y1="337.2" x2="1771.0" y2="685.1" stroke="#6e6e6e" stroke-width="1" />
<line x1="0.0" y1="357.6" x2="1760.2" y2="692.0" stroke="#6e6e6e" stroke-width="1" />
<line x1="0.0" y1="376.7" x2="1714.5" y2="692.0" stroke="#6e6e6e" stroke-width="1" />
<line x1="0.0" y1="394.6" x2="1668.8" y2="692.0" stroke="#6e6e6e" stroke-width="1" />
<line x1="0.0" y1="411.5" x2="1623.0" y2="692.0" stroke="#6e6e6e" stroke-width="1" />
<line x1="0.0" y1="427.3" x2="1577.3" y2="692.0" stroke="#6e6e6e" stroke-width="1" />
<line x1="0.0" y1="442.2" x2="1531.7" y2="692.0" stroke="#6e6e6e" stroke-width="1" />
<line x1="0.0" y1="456.4" x2="1486.0" y2="692.0" stroke="#6e6e6e" stroke-width="1" />
<line x1="0.0" y1="469.7" x2="1440.3" y2="692.0" stroke="#6e6e6e" stroke-width="1" />
<line x1="0.0" y1="482.4" x2="1394.7" y2="692.0" stroke="#6e6e6e" stroke-width="1" />
<line x1="0.0" y1="494.4" x2="1349.1" y2="692.0" stroke="#6e6e6e" stroke-width="1" />
<line x1="0.0" y1="505.8" x2="1303.5" y2="692.0" stroke="#6e6e6e" stroke-width="1" />
<line x1="0.0" y1="516.6" x2="1257.9" y2="692.0" stroke="#6e6e6e" stroke-width="1" />
<line x1="0.0" y1="527.0" x2="1212.3" y2="692.0" stroke="#6e6e6e" stroke-width="1" />
<line x1="0.0" y1="536.8" x2="1166.7" y2="692.0" stroke="#6e6e6e" stroke-width="1" />
<line x1="0.0" y1="546.2" x2="1121.1" y2="692.0" stroke="#6e6e6e" stroke-width="1" />
<line x1="0.0" y1="555.2" x2="1075.6" y2="692.0" stroke="#6e6e6e" stroke-width="1" />
<line x1="0.0" y1="563.8" x2="1030.1" y2="692.0" stroke="#6e6e6e" stroke-width="1" />
<line x1="0.0" y1="572.1" x2="984.5" y2="692.0" stroke="#6e6e6e" stroke-width="1" />
<line x1="0.0" y1="580.0" x2="939.0" y2="692.0" stroke="#6e6e6e" stroke-width="1" />
<line x1="0.0" y1="587.6" x2="893.5" y2="692.0" stroke="#6e6e6e" stroke-width="1" />
<line x1="0.0" y1="594.8" x2="848.1" y2="692.0" stroke="#6e6e6e" stroke-width="1" />
<line x1="0.0" y1="601.8" x2="802.6" y2="692.0" stroke="#6e6e6e" stroke-width="1" />
<line x1="0.0" y1="608.6" x2="757.1" y2="692.0" stroke="#6e6e6e" stroke-width="1" />
<line x1="0.0" y1="615.0" x2="711.7" y2="692.0" stroke="#6e6e6e" stroke-width="1" />
<line x1="0.0" y1="621.3" x2="666.3" y2="692.0" stroke="#6e6e6e" stroke-width="1" />
<line x1="0.0" y1="627.3" x2="620.9" y2="692.0" stroke="#6e6e6e" stroke-width="1" />
<line x1="0.0" y1="633.1" x2="575.5" y2="692.0" stroke="#6e6e6e" stroke-width="1" />
<line x1="0.0" y1="638.7" x2="530.1" y2="692.0" stroke="#6e6e6e" stroke-width="1" />
<line x1="0.0" y1="644.0" x2="484.7" y2="692.0" stroke="#6e6e6e" stroke-width="1" />
<line x1="0.0" y1="649.3" x2="439.4" y2="692.0" stroke="#6e6e6e" stroke-width="1" />
<line x1="0.0" y1="654.3" x2="394.0" y2="692.0" stroke="#6e6e6e" stroke-width="1" />
<line x1="0.0" y1="659.2" x2="348.7" y2="692.0" stroke="#6e6e6e" stroke-width="1" />
<line x1="0.0" y1="663.9" x2="303.4" y2="692.0" stroke="#6e6e6e" stroke-width="1" />
<line x1="0.0" y1="668.5" x2="258.1" y2="692.0" stroke="#6e6e6e" stroke-width="1" />
<line x1="0.0" y1="672.9" x2="212.8" y2="692.0" stroke="#6e6e6e" stroke-width="1" />
<line x1="0.0" y1="677.2" x2="167.5" y2="692.0" stroke="#6e6e6e" stroke-width="1" />
<line x1="0.0" y1="681.4" x2="122.3" y2="692.0" stroke="#6e6e6e" stroke-width="1" />
<line x1="0.0" y1="685.4" x2="77.0" y2="692.0" stroke="#6e6e6e" stroke-width="1" />
<line x1="0.0" y1="689.3" x2="31.8" y2="692.0" stroke="#6e6e6e" stroke-width="1" /></g>
<g clip-path="url(#mclipT)" opacity="0.6"><line x1="0.0" y1="410.3" x2="1771.0" y2="710.1" stroke="#c04a50" stroke-width="1.2" /><line x1="112.0" y1="691.5" x2="1771.0" y2="423.6" stroke="#6a9a2a" stroke-width="1.2" /></g>
<circle cx="899" cy="563" r="9" fill="none" stroke="#ddd" stroke-width="1.5" stroke-dasharray="3 3"/>
<circle cx="899" cy="563" r="9" fill="none" stroke="#c33" stroke-width="1.5" stroke-dasharray="3 3" stroke-dashoffset="3"/>
<line x1="899.0" y1="545.0" x2="899.0" y2="556.0" stroke="#111" stroke-width="1" /><line x1="899.0" y1="570.0" x2="899.0" y2="581.0" stroke="#111" stroke-width="1" /><line x1="881.0" y1="563.0" x2="892.0" y2="563.0" stroke="#111" stroke-width="1" /><line x1="906.0" y1="563.0" x2="917.0" y2="563.0" stroke="#111" stroke-width="1" />
</svg></div>
<div id="vbot"><svg width="1752" height="568" viewBox="0 694 1752 568" style="position:absolute;left:0;top:0">
<defs><clipPath id="floorclipB"><polygon points="264.6,754 1437.2,935.8 1437.2,1139 1026.6,1240.3 51.4,1160.7 51.4,964.7"/></clipPath><clipPath id="mclipB"><polygon points="51.4,964.7 264.6,754 1437.2,935.8 1437.2,1139 1026.6,1240.3 51.4,1160.7"/></clipPath><linearGradient id="fadeB" x1="0" y1="694" x2="0" y2="1262" gradientUnits="userSpaceOnUse"><stop offset="0" stop-color="#fff" stop-opacity="1"/><stop offset="0.45" stop-color="#fff" stop-opacity="0.9"/><stop offset="1" stop-color="#fff" stop-opacity="0.4"/></linearGradient><mask id="maskB"><rect x="0" y="694" width="1752" height="568" fill="url(#fadeB)"/></mask></defs>
<rect x="0" y="694" width="1752" height="568" fill="#393939"/>
<g mask="url(#maskB)"><line x1="12.1" y1="694.0" x2="0.0" y2="710.0" stroke="#4e4e4e" stroke-width="1" />
<line x1="87.4" y1="694.0" x2="0.0" y2="803.2" stroke="#4e4e4e" stroke-width="1" />
<line x1="161.8" y1="694.0" x2="0.0" y2="885.4" stroke="#4e4e4e" stroke-width="1" />
<line x1="235.1" y1="694.0" x2="0.0" y2="958.6" stroke="#4e4e4e" stroke-width="1" />
<line x1="307.4" y1="694.0" x2="0.0" y2="1024.1" stroke="#4e4e4e" stroke-width="1" />
<line x1="378.7" y1="694.0" x2="0.0" y2="1083.0" stroke="#4e4e4e" stroke-width="1" />
<line x1="449.2" y1="694.0" x2="0.0" y2="1136.4" stroke="#4e4e4e" stroke-width="1" />
<line x1="518.7" y1="694.0" x2="0.0" y2="1184.9" stroke="#4e4e4e" stroke-width="1" />
<line x1="587.2" y1="694.0" x2="0.0" y2="1229.2" stroke="#4e4e4e" stroke-width="1" />
<line x1="654.9" y1="694.0" x2="8.9" y2="1262.0" stroke="#4e4e4e" stroke-width="1" />
<line x1="721.7" y1="694.0" x2="53.2" y2="1262.0" stroke="#4e4e4e" stroke-width="1" />
<line x1="787.7" y1="694.0" x2="97.0" y2="1262.0" stroke="#4e4e4e" stroke-width="1" />
<line x1="852.8" y1="694.0" x2="140.2" y2="1262.0" stroke="#4e4e4e" stroke-width="1" />
<line x1="917.1" y1="694.0" x2="182.8" y2="1262.0" stroke="#4e4e4e" stroke-width="1" />
<line x1="980.6" y1="694.0" x2="224.9" y2="1262.0" stroke="#4e4e4e" stroke-width="1" />
<line x1="1043.3" y1="694.0" x2="266.5" y2="1262.0" stroke="#4e4e4e" stroke-width="1" />
<line x1="1105.2" y1="694.0" x2="307.5" y2="1262.0" stroke="#4e4e4e" stroke-width="1" />
<line x1="1166.4" y1="694.0" x2="348.1" y2="1262.0" stroke="#4e4e4e" stroke-width="1" />
<line x1="1226.8" y1="694.0" x2="388.2" y2="1262.0" stroke="#4e4e4e" stroke-width="1" />
<line x1="1286.5" y1="694.0" x2="427.7" y2="1262.0" stroke="#4e4e4e" stroke-width="1" />
<line x1="1345.4" y1="694.0" x2="466.8" y2="1262.0" stroke="#4e4e4e" stroke-width="1" />
<line x1="1403.6" y1="694.0" x2="505.4" y2="1262.0" stroke="#4e4e4e" stroke-width="1" />
<line x1="1461.2" y1="694.0" x2="543.6" y2="1262.0" stroke="#4e4e4e" stroke-width="1" />
<line x1="1518.0" y1="694.0" x2="581.3" y2="1262.0" stroke="#4e4e4e" stroke-width="1" />
<line x1="1574.2" y1="694.0" x2="618.6" y2="1262.0" stroke="#4e4e4e" stroke-width="1" />
<line x1="1629.7" y1="694.0" x2="655.4" y2="1262.0" stroke="#4e4e4e" stroke-width="1" />
<line x1="1684.6" y1="694.0" x2="691.8" y2="1262.0" stroke="#4e4e4e" stroke-width="1" />
<line x1="1738.8" y1="694.0" x2="727.8" y2="1262.0" stroke="#4e4e4e" stroke-width="1" />
<line x1="1752.0" y1="716.3" x2="763.3" y2="1262.0" stroke="#4e4e4e" stroke-width="1" />
<line x1="1752.0" y1="744.7" x2="798.4" y2="1262.0" stroke="#4e4e4e" stroke-width="1" />
<line x1="1752.0" y1="771.8" x2="833.2" y2="1262.0" stroke="#4e4e4e" stroke-width="1" />
<line x1="1752.0" y1="797.7" x2="867.5" y2="1262.0" stroke="#4e4e4e" stroke-width="1" />
<line x1="1752.0" y1="822.6" x2="901.5" y2="1262.0" stroke="#4e4e4e" stroke-width="1" />
<line x1="1752.0" y1="846.4" x2="935.1" y2="1262.0" stroke="#4e4e4e" stroke-width="1" />
<line x1="1752.0" y1="869.2" x2="968.3" y2="1262.0" stroke="#4e4e4e" stroke-width="1" />
<line x1="1752.0" y1="891.1" x2="1001.1" y2="1262.0" stroke="#4e4e4e" stroke-width="1" />
<line x1="1752.0" y1="912.2" x2="1033.6" y2="1262.0" stroke="#4e4e4e" stroke-width="1" />
<line x1="1752.0" y1="932.4" x2="1065.7" y2="1262.0" stroke="#4e4e4e" stroke-width="1" />
<line x1="1752.0" y1="951.9" x2="1097.5" y2="1262.0" stroke="#4e4e4e" stroke-width="1" />
<line x1="1752.0" y1="970.7" x2="1128.9" y2="1262.0" stroke="#4e4e4e" stroke-width="1" />
<line x1="1752.0" y1="988.7" x2="1160.0" y2="1262.0" stroke="#4e4e4e" stroke-width="1" />
<line x1="1752.0" y1="1006.2" x2="1190.7" y2="1262.0" stroke="#4e4e4e" stroke-width="1" />
<line x1="1752.0" y1="1023.0" x2="1221.1" y2="1262.0" stroke="#4e4e4e" stroke-width="1" />
<line x1="1752.0" y1="1039.2" x2="1251.2" y2="1262.0" stroke="#4e4e4e" stroke-width="1" />
<line x1="1752.0" y1="1054.9" x2="1281.0" y2="1262.0" stroke="#4e4e4e" stroke-width="1" />
<line x1="1752.0" y1="1070.1" x2="1310.5" y2="1262.0" stroke="#4e4e4e" stroke-width="1" />
<line x1="1752.0" y1="1084.8" x2="1339.6" y2="1262.0" stroke="#4e4e4e" stroke-width="1" />
<line x1="1752.0" y1="1099.0" x2="1368.5" y2="1262.0" stroke="#4e4e4e" stroke-width="1" />
<line x1="1752.0" y1="1112.8" x2="1397.0" y2="1262.0" stroke="#4e4e4e" stroke-width="1" />
<line x1="1752.0" y1="1126.1" x2="1425.3" y2="1262.0" stroke="#4e4e4e" stroke-width="1" />
<line x1="1752.0" y1="1139.0" x2="1453.2" y2="1262.0" stroke="#4e4e4e" stroke-width="1" />
<line x1="1752.0" y1="1151.5" x2="1480.9" y2="1262.0" stroke="#4e4e4e" stroke-width="1" />
<line x1="1752.0" y1="1163.7" x2="1508.3" y2="1262.0" stroke="#4e4e4e" stroke-width="1" />
<line x1="1752.0" y1="1175.5" x2="1535.5" y2="1262.0" stroke="#4e4e4e" stroke-width="1" />
<line x1="1752.0" y1="1186.9" x2="1562.3" y2="1262.0" stroke="#4e4e4e" stroke-width="1" />
<line x1="1752.0" y1="1198.0" x2="1588.9" y2="1262.0" stroke="#4e4e4e" stroke-width="1" />
<line x1="1752.0" y1="1208.8" x2="1615.2" y2="1262.0" stroke="#4e4e4e" stroke-width="1" />
<line x1="1752.0" y1="1219.4" x2="1641.3" y2="1262.0" stroke="#4e4e4e" stroke-width="1" />
<line x1="1752.0" y1="1229.6" x2="1667.1" y2="1262.0" stroke="#4e4e4e" stroke-width="1" />
<line x1="1752.0" y1="1239.5" x2="1692.6" y2="1262.0" stroke="#4e4e4e" stroke-width="1" />
<line x1="1752.0" y1="1249.2" x2="1717.9" y2="1262.0" stroke="#4e4e4e" stroke-width="1" />
<line x1="1752.0" y1="1258.6" x2="1743.0" y2="1262.0" stroke="#4e4e4e" stroke-width="1" />
<line x1="1720.4" y1="694.0" x2="1752.0" y2="701.2" stroke="#4e4e4e" stroke-width="1" />
<line x1="1572.4" y1="694.0" x2="1752.0" y2="733.5" stroke="#4e4e4e" stroke-width="1" />
<line x1="1419.6" y1="694.0" x2="1752.0" y2="764.2" stroke="#4e4e4e" stroke-width="1" />
<line x1="1261.8" y1="694.0" x2="1752.0" y2="793.4" stroke="#4e4e4e" stroke-width="1" />
<line x1="1098.7" y1="694.0" x2="1752.0" y2="821.2" stroke="#4e4e4e" stroke-width="1" />
<line x1="930.0" y1="694.0" x2="1752.0" y2="847.8" stroke="#4e4e4e" stroke-width="1" />
<line x1="755.5" y1="694.0" x2="1752.0" y2="873.1" stroke="#4e4e4e" stroke-width="1" />
<line x1="574.9" y1="694.0" x2="1752.0" y2="897.3" stroke="#4e4e4e" stroke-width="1" />
<line x1="387.8" y1="694.0" x2="1752.0" y2="920.4" stroke="#4e4e4e" stroke-width="1" />
<line x1="193.9" y1="694.0" x2="1752.0" y2="942.6" stroke="#4e4e4e" stroke-width="1" />
<line x1="0.0" y1="695.1" x2="1752.0" y2="963.9" stroke="#4e4e4e" stroke-width="1" />
<line x1="0.0" y1="725.9" x2="1752.0" y2="984.2" stroke="#4e4e4e" stroke-width="1" />
<line x1="0.0" y1="755.4" x2="1752.0" y2="1003.8" stroke="#4e4e4e" stroke-width="1" />
<line x1="0.0" y1="783.7" x2="1752.0" y2="1022.6" stroke="#4e4e4e" stroke-width="1" />
<line x1="0.0" y1="811.0" x2="1752.0" y2="1040.7" stroke="#4e4e4e" stroke-width="1" />
<line x1="0.0" y1="837.3" x2="1752.0" y2="1058.1" stroke="#4e4e4e" stroke-width="1" />
<line x1="0.0" y1="862.6" x2="1752.0" y2="1074.9" stroke="#4e4e4e" stroke-width="1" />
<line x1="0.0" y1="886.9" x2="1752.0" y2="1091.0" stroke="#4e4e4e" stroke-width="1" />
<line x1="0.0" y1="910.4" x2="1752.0" y2="1106.6" stroke="#4e4e4e" stroke-width="1" />
<line x1="0.0" y1="933.1" x2="1752.0" y2="1121.7" stroke="#4e4e4e" stroke-width="1" />
<line x1="0.0" y1="955.0" x2="1752.0" y2="1136.2" stroke="#4e4e4e" stroke-width="1" />
<line x1="0.0" y1="976.1" x2="1752.0" y2="1150.2" stroke="#4e4e4e" stroke-width="1" />
<line x1="0.0" y1="996.6" x2="1752.0" y2="1163.8" stroke="#4e4e4e" stroke-width="1" />
<line x1="0.0" y1="1016.4" x2="1752.0" y2="1176.9" stroke="#4e4e4e" stroke-width="1" />
<line x1="0.0" y1="1035.5" x2="1752.0" y2="1189.6" stroke="#4e4e4e" stroke-width="1" />
<line x1="0.0" y1="1054.1" x2="1752.0" y2="1201.9" stroke="#4e4e4e" stroke-width="1" />
<line x1="0.0" y1="1072.0" x2="1752.0" y2="1213.8" stroke="#4e4e4e" stroke-width="1" />
<line x1="0.0" y1="1089.5" x2="1752.0" y2="1225.4" stroke="#4e4e4e" stroke-width="1" />
<line x1="0.0" y1="1106.3" x2="1752.0" y2="1236.5" stroke="#4e4e4e" stroke-width="1" />
<line x1="0.0" y1="1122.7" x2="1752.0" y2="1247.4" stroke="#4e4e4e" stroke-width="1" />
<line x1="0.0" y1="1138.6" x2="1752.0" y2="1258.0" stroke="#4e4e4e" stroke-width="1" />
<line x1="0.0" y1="1154.1" x2="1656.8" y2="1262.0" stroke="#4e4e4e" stroke-width="1" />
<line x1="0.0" y1="1169.1" x2="1492.6" y2="1262.0" stroke="#4e4e4e" stroke-width="1" />
<line x1="0.0" y1="1183.7" x2="1317.7" y2="1262.0" stroke="#4e4e4e" stroke-width="1" />
<line x1="0.0" y1="1197.8" x2="1131.1" y2="1262.0" stroke="#4e4e4e" stroke-width="1" />
<line x1="0.0" y1="1211.6" x2="931.5" y2="1262.0" stroke="#4e4e4e" stroke-width="1" />
<line x1="0.0" y1="1225.1" x2="717.6" y2="1262.0" stroke="#4e4e4e" stroke-width="1" />
<line x1="0.0" y1="1238.1" x2="487.7" y2="1262.0" stroke="#4e4e4e" stroke-width="1" />
<line x1="0.0" y1="1250.8" x2="240.0" y2="1262.0" stroke="#4e4e4e" stroke-width="1" /></g>
<line x1="0.0" y1="1065.0" x2="1752.0" y2="1233.9" stroke="#8c3840" stroke-width="1.2" />
<line x1="450.0" y1="1262.0" x2="1752.0" y2="800.7" stroke="#56782a" stroke-width="1.2" />
<polygon points="264.6,754.0 1437.2,935.8 1437.2,1139.0 1026.6,1240.3 51.4,1160.7 51.4,964.7" fill="#77726a" />
<g clip-path="url(#floorclipB)">
<line x1="1752.0" y1="1003.9" x2="0.0" y2="739.4" stroke="#e8892e" stroke-width="1.1" stroke-opacity="0.9"/>
<line x1="1752.0" y1="1017.1" x2="0.0" y2="758.1" stroke="#e8892e" stroke-width="1.1" stroke-opacity="0.9"/>
<line x1="1752.0" y1="1042.4" x2="0.0" y2="793.7" stroke="#e8892e" stroke-width="1.1" stroke-opacity="0.9" stroke-dasharray="9 4"/>
<line x1="1752.0" y1="1054.4" x2="0.0" y2="810.6" stroke="#e8892e" stroke-width="1.1" stroke-opacity="0.9"/>
<line x1="1752.0" y1="1065.0" x2="0.0" y2="825.7" stroke="#e8892e" stroke-width="1.1" stroke-opacity="0.9"/>
<line x1="1752.0" y1="1076.0" x2="0.0" y2="841.2" stroke="#e8892e" stroke-width="1.1" stroke-opacity="0.9" stroke-dasharray="9 4"/>
<line x1="1752.0" y1="1086.0" x2="0.0" y2="855.2" stroke="#e8892e" stroke-width="1.1" stroke-opacity="0.9"/>
<line x1="1752.0" y1="1145.7" x2="0.0" y2="939.4" stroke="#e8892e" stroke-width="1.1" stroke-opacity="0.9"/>
<line x1="1752.0" y1="1186.0" x2="0.0" y2="996.3" stroke="#e8892e" stroke-width="1.1" stroke-opacity="0.9"/>
<line x1="1752.0" y1="1195.1" x2="0.0" y2="1009.1" stroke="#e8892e" stroke-width="1.1" stroke-opacity="0.9" stroke-dasharray="9 4"/>
<line x1="1752.0" y1="1212.4" x2="0.0" y2="1033.5" stroke="#e8892e" stroke-width="1.1" stroke-opacity="0.9"/>
<line x1="1752.0" y1="1220.8" x2="0.0" y2="1045.4" stroke="#e8892e" stroke-width="1.1" stroke-opacity="0.9"/>
<line x1="1752.0" y1="1228.5" x2="0.0" y2="1056.2" stroke="#e8892e" stroke-width="1.1" stroke-opacity="0.9" stroke-dasharray="9 4"/>
<line x1="1752.0" y1="1235.4" x2="0.0" y2="1065.9" stroke="#e8892e" stroke-width="1.1" stroke-opacity="0.9"/>
<line x1="1752.0" y1="1243.0" x2="0.0" y2="1076.7" stroke="#e8892e" stroke-width="1.1" stroke-opacity="0.9"/>
<line x1="1470.7" y1="1262.0" x2="0.0" y2="1137.2" stroke="#e8892e" stroke-width="1.1" stroke-opacity="0.9" stroke-dasharray="9 4"/>
<line x1="0.0" y1="1092.5" x2="448.2" y2="690.0" stroke="#e8892e" stroke-width="1.1" stroke-opacity="0.9"/>
<line x1="0.0" y1="1146.1" x2="562.5" y2="690.0" stroke="#e8892e" stroke-width="1.1" stroke-opacity="0.9"/>
<line x1="0.0" y1="1190.5" x2="677.8" y2="690.0" stroke="#e8892e" stroke-width="1.1" stroke-opacity="0.9"/>
<line x1="0.0" y1="1209.7" x2="734.6" y2="690.0" stroke="#e8892e" stroke-width="1.1" stroke-opacity="0.9" stroke-dasharray="6 3"/>
<line x1="0.0" y1="1227.5" x2="792.3" y2="690.0" stroke="#e8892e" stroke-width="1.1" stroke-opacity="0.9"/>
<line x1="0.0" y1="1243.8" x2="849.5" y2="690.0" stroke="#e8892e" stroke-width="1.1" stroke-opacity="0.9"/>
<line x1="0.0" y1="1247.2" x2="862.2" y2="690.0" stroke="#e8892e" stroke-width="1.1" stroke-opacity="0.9"/>
<line x1="42.4" y1="1262.0" x2="1025.4" y2="690.0" stroke="#e8892e" stroke-width="1.1" stroke-opacity="0.9"/>
<line x1="106.5" y1="1262.0" x2="1185.3" y2="690.0" stroke="#e8892e" stroke-width="1.1" stroke-opacity="0.9"/>
<line x1="139.1" y1="1262.0" x2="1266.8" y2="690.0" stroke="#e8892e" stroke-width="1.1" stroke-opacity="0.9" stroke-dasharray="6 3"/>
<line x1="171.1" y1="1262.0" x2="1346.7" y2="690.0" stroke="#e8892e" stroke-width="1.1" stroke-opacity="0.9"/>
<line x1="203.5" y1="1262.0" x2="1427.5" y2="690.0" stroke="#e8892e" stroke-width="1.1" stroke-opacity="0.9"/>
<line x1="236.3" y1="1262.0" x2="1509.5" y2="690.0" stroke="#e8892e" stroke-width="1.1" stroke-opacity="0.9"/>
<line x1="300.8" y1="1262.0" x2="1670.7" y2="690.0" stroke="#e8892e" stroke-width="1.1" stroke-opacity="0.9"/>
<line x1="369.7" y1="1262.0" x2="1752.0" y2="725.2" stroke="#e8892e" stroke-width="1.1" stroke-opacity="0.9" stroke-dasharray="6 3"/>
<line x1="438.2" y1="1262.0" x2="1752.0" y2="785.0" stroke="#e8892e" stroke-width="1.1" stroke-opacity="0.9"/>
<line x1="508.3" y1="1262.0" x2="1752.0" y2="838.7" stroke="#e8892e" stroke-width="1.1" stroke-opacity="0.9"/>
<line x1="577.8" y1="1262.0" x2="1752.0" y2="885.6" stroke="#e8892e" stroke-width="1.1" stroke-opacity="0.9"/>
<line x1="623.0" y1="1262.0" x2="1752.0" y2="913.4" stroke="#e8892e" stroke-width="1.1" stroke-opacity="0.9"/>
<line x1="686.6" y1="1262.0" x2="1752.0" y2="949.1" stroke="#e8892e" stroke-width="1.1" stroke-opacity="0.9"/>
<line x1="751.6" y1="1262.0" x2="1752.0" y2="982.1" stroke="#e8892e" stroke-width="1.1" stroke-opacity="0.9" stroke-dasharray="6 3"/>
<line x1="817.7" y1="1262.0" x2="1752.0" y2="1012.7" stroke="#e8892e" stroke-width="1.1" stroke-opacity="0.9"/>
<line x1="876.4" y1="1262.0" x2="1752.0" y2="1037.6" stroke="#e8892e" stroke-width="1.1" stroke-opacity="0.9"/>
<line x1="935.9" y1="1262.0" x2="1752.0" y2="1060.9" stroke="#e8892e" stroke-width="1.1" stroke-opacity="0.9"/>
</g>
<polygon points="264.6,754.0 1437.2,935.8 1437.2,942.0 271.8,761.0" fill="#8b9195" />
<polygon points="271.8,995.5 700.0,1042.8 1026.6,1079.8 1437.2,1133.0 1437.2,1141.0 1192.7,1106.6 700.0,1052.0 264.6,1010.0" fill="#8b9195" />
<line x1="271.8" y1="995.5" x2="1437.2" y2="1133.0" stroke="#e8892e" stroke-width="1.3" />
<line x1="264.6" y1="1010.0" x2="1437.2" y2="1141.0" stroke="#e8892e" stroke-width="1.3" />
<polygon points="51.4,964.7 264.6,754.0 264.6,1006.0 51.4,1160.7" fill="#bebcb8" />
<polygon points="77.6,992.0 150.4,925.5 150.4,979.7 77.6,1041.5" fill="#8b9195" />
<polygon points="77.6,992.0 150.4,925.5 150.4,957.0 103.0,974.0" fill="#7a746b" />
<polyline points="77.6,992 150.4,925.5 150.4,979.7 77.6,1041.5 77.6,992" fill="none" stroke="#e8892e" stroke-width="1"/>
<polygon points="163.7,911.3 176.4,900.8 176.4,959.7 163.7,966.4" fill="#8a9095" />
<polygon points="170.1,906.0 176.4,900.8 176.4,959.7 170.1,963.0" fill="#6f6b66" />
<polygon points="163.7,911.3 176.4,900.8 176.4,959.7 163.7,966.4" fill="none" stroke="#e8892e" stroke-width="1"/>
<polygon points="189.7,887.5 203.6,876.0 203.6,934.0 189.7,945.5" fill="#8a9095" />
<polygon points="196.6,881.8 203.6,876.0 203.6,934.0 196.6,939.8" fill="#6f6b66" />
<polygon points="189.7,887.5 203.6,876.0 203.6,934.0 189.7,945.5" fill="none" stroke="#e8892e" stroke-width="1"/>
<polygon points="232.5,847.6 248.1,835.2 248.1,896.0 232.5,908.4" fill="#8a9095" />
<polygon points="240.3,841.4 248.1,835.2 248.1,896.0 240.3,902.2" fill="#6f6b66" />
<polygon points="232.5,847.6 248.1,835.2 248.1,896.0 232.5,908.4" fill="none" stroke="#e8892e" stroke-width="1"/>
<line x1="76.6" y1="939.8" x2="76.6" y2="1142.4" stroke="#e8892e" stroke-width="1" stroke-opacity="0.9"/>
<line x1="150.4" y1="866.9" x2="150.4" y2="1088.9" stroke="#e8892e" stroke-width="1" stroke-opacity="0.9"/>
<line x1="163.7" y1="853.7" x2="163.7" y2="1079.2" stroke="#e8892e" stroke-width="1" stroke-opacity="0.9"/>
<line x1="176.4" y1="841.2" x2="176.4" y2="1070.0" stroke="#e8892e" stroke-width="1" stroke-opacity="0.9"/>
<line x1="189.7" y1="828.0" x2="189.7" y2="1060.3" stroke="#e8892e" stroke-width="1" stroke-opacity="0.9"/>
<line x1="203.6" y1="814.3" x2="203.6" y2="1050.3" stroke="#e8892e" stroke-width="1" stroke-opacity="0.9"/>
<line x1="232.5" y1="785.7" x2="232.5" y2="1029.3" stroke="#e8892e" stroke-width="1" stroke-opacity="0.9"/>
<line x1="248.1" y1="770.3" x2="248.1" y2="1018.0" stroke="#e8892e" stroke-width="1" stroke-opacity="0.9"/>
<line x1="51.4" y1="1014.0" x2="264.6" y2="822.0" stroke="#e8892e" stroke-width="1" stroke-opacity="0.85"/>
<line x1="51.4" y1="1063.0" x2="264.6" y2="882.0" stroke="#e8892e" stroke-width="1" stroke-opacity="0.85"/>
<line x1="51.4" y1="1118.0" x2="264.6" y2="948.0" stroke="#e8892e" stroke-width="1" stroke-opacity="0.85"/>
<polygon points="264.6,754.0 271.8,763.0 271.8,995.5 264.6,1008.0" fill="#8b9195" />
<polygon points="1026.6,1079.8 1433.4,940.4 1437.2,1133.0 1026.6,1080.0" fill="#bdbbb8" />
<polygon points="1089.6,1095.0 1217.6,1058.0 1217.6,1106.6 1192.7,1105.4" fill="#2e2e2e" />
<polygon points="1247.0,1045.0 1267.0,1040.0 1267.0,1085.6 1247.0,1091.0" fill="#2e2e2e" />
<polygon points="1247.0,1045.0 1267.0,1040.0 1267.0,1085.6 1247.0,1091.0" fill="none" stroke="#e8892e" stroke-width="1"/>
<polygon points="1298.5,1030.0 1318.8,1024.5 1318.8,1070.0 1298.5,1076.0" fill="#2e2e2e" />
<polygon points="1298.5,1030.0 1318.8,1024.5 1318.8,1070.0 1298.5,1076.0" fill="none" stroke="#e8892e" stroke-width="1"/>
<polygon points="1379.0,1004.6 1402.0,998.5 1402.0,1047.4 1379.0,1053.0" fill="#2e2e2e" />
<polygon points="1379.0,1004.6 1402.0,998.5 1402.0,1047.4 1379.0,1053.0" fill="none" stroke="#e8892e" stroke-width="1"/>
<line x1="1063.0" y1="1067.3" x2="1063.0" y2="1084.7" stroke="#e8892e" stroke-width="1" stroke-opacity="0.85"/>
<line x1="1217.6" y1="1014.3" x2="1217.6" y2="1104.7" stroke="#e8892e" stroke-width="1" stroke-opacity="0.85"/>
<line x1="1247.0" y1="1004.3" x2="1247.0" y2="1108.4" stroke="#e8892e" stroke-width="1" stroke-opacity="0.85"/>
<line x1="1267.0" y1="997.4" x2="1267.0" y2="1111.0" stroke="#e8892e" stroke-width="1" stroke-opacity="0.85"/>
<line x1="1298.5" y1="986.6" x2="1298.5" y2="1115.1" stroke="#e8892e" stroke-width="1" stroke-opacity="0.85"/>
<line x1="1318.8" y1="979.7" x2="1318.8" y2="1117.7" stroke="#e8892e" stroke-width="1" stroke-opacity="0.85"/>
<line x1="1379.0" y1="959.0" x2="1379.0" y2="1125.5" stroke="#e8892e" stroke-width="1" stroke-opacity="0.85"/>
<line x1="1402.0" y1="951.2" x2="1402.0" y2="1128.5" stroke="#e8892e" stroke-width="1" stroke-opacity="0.85"/>
<line x1="1217.6" y1="1041.4" x2="1433.4" y2="998.3" stroke="#e8892e" stroke-width="1" stroke-opacity="0.85"/>
<line x1="1217.6" y1="1070.3" x2="1433.4" y2="1060.1" stroke="#e8892e" stroke-width="1" stroke-opacity="0.85"/>
<polygon points="1433.4,940.4 1437.2,935.8 1437.2,1139.0 1433.4,1133.0" fill="#8b9195" />
<polyline points="51.4,1160.7 51.4,964.7 264.6,754.0 1437.2,935.8 1437.2,1139.0 1026.6,1240.3 51.4,1160.7" fill="none" stroke="#f0902e" stroke-width="2"/>
<line x1="264.6" y1="754.0" x2="264.6" y2="1008.0" stroke="#f0902e" stroke-width="1.5" />
<line x1="1026.6" y1="1079.8" x2="1433.4" y2="940.4" stroke="#f0902e" stroke-width="1.5" />
<g clip-path="url(#mclipB)" opacity="0.3"><line x1="12.1" y1="694.0" x2="0.0" y2="710.0" stroke="#6e6e6e" stroke-width="1" />
<line x1="87.4" y1="694.0" x2="0.0" y2="803.2" stroke="#6e6e6e" stroke-width="1" />
<line x1="161.8" y1="694.0" x2="0.0" y2="885.4" stroke="#6e6e6e" stroke-width="1" />
<line x1="235.1" y1="694.0" x2="0.0" y2="958.6" stroke="#6e6e6e" stroke-width="1" />
<line x1="307.4" y1="694.0" x2="0.0" y2="1024.1" stroke="#6e6e6e" stroke-width="1" />
<line x1="378.7" y1="694.0" x2="0.0" y2="1083.0" stroke="#6e6e6e" stroke-width="1" />
<line x1="449.2" y1="694.0" x2="0.0" y2="1136.4" stroke="#6e6e6e" stroke-width="1" />
<line x1="518.7" y1="694.0" x2="0.0" y2="1184.9" stroke="#6e6e6e" stroke-width="1" />
<line x1="587.2" y1="694.0" x2="0.0" y2="1229.2" stroke="#6e6e6e" stroke-width="1" />
<line x1="654.9" y1="694.0" x2="8.9" y2="1262.0" stroke="#6e6e6e" stroke-width="1" />
<line x1="721.7" y1="694.0" x2="53.2" y2="1262.0" stroke="#6e6e6e" stroke-width="1" />
<line x1="787.7" y1="694.0" x2="97.0" y2="1262.0" stroke="#6e6e6e" stroke-width="1" />
<line x1="852.8" y1="694.0" x2="140.2" y2="1262.0" stroke="#6e6e6e" stroke-width="1" />
<line x1="917.1" y1="694.0" x2="182.8" y2="1262.0" stroke="#6e6e6e" stroke-width="1" />
<line x1="980.6" y1="694.0" x2="224.9" y2="1262.0" stroke="#6e6e6e" stroke-width="1" />
<line x1="1043.3" y1="694.0" x2="266.5" y2="1262.0" stroke="#6e6e6e" stroke-width="1" />
<line x1="1105.2" y1="694.0" x2="307.5" y2="1262.0" stroke="#6e6e6e" stroke-width="1" />
<line x1="1166.4" y1="694.0" x2="348.1" y2="1262.0" stroke="#6e6e6e" stroke-width="1" />
<line x1="1226.8" y1="694.0" x2="388.2" y2="1262.0" stroke="#6e6e6e" stroke-width="1" />
<line x1="1286.5" y1="694.0" x2="427.7" y2="1262.0" stroke="#6e6e6e" stroke-width="1" />
<line x1="1345.4" y1="694.0" x2="466.8" y2="1262.0" stroke="#6e6e6e" stroke-width="1" />
<line x1="1403.6" y1="694.0" x2="505.4" y2="1262.0" stroke="#6e6e6e" stroke-width="1" />
<line x1="1461.2" y1="694.0" x2="543.6" y2="1262.0" stroke="#6e6e6e" stroke-width="1" />
<line x1="1518.0" y1="694.0" x2="581.3" y2="1262.0" stroke="#6e6e6e" stroke-width="1" />
<line x1="1574.2" y1="694.0" x2="618.6" y2="1262.0" stroke="#6e6e6e" stroke-width="1" />
<line x1="1629.7" y1="694.0" x2="655.4" y2="1262.0" stroke="#6e6e6e" stroke-width="1" />
<line x1="1684.6" y1="694.0" x2="691.8" y2="1262.0" stroke="#6e6e6e" stroke-width="1" />
<line x1="1738.8" y1="694.0" x2="727.8" y2="1262.0" stroke="#6e6e6e" stroke-width="1" />
<line x1="1752.0" y1="716.3" x2="763.3" y2="1262.0" stroke="#6e6e6e" stroke-width="1" />
<line x1="1752.0" y1="744.7" x2="798.4" y2="1262.0" stroke="#6e6e6e" stroke-width="1" />
<line x1="1752.0" y1="771.8" x2="833.2" y2="1262.0" stroke="#6e6e6e" stroke-width="1" />
<line x1="1752.0" y1="797.7" x2="867.5" y2="1262.0" stroke="#6e6e6e" stroke-width="1" />
<line x1="1752.0" y1="822.6" x2="901.5" y2="1262.0" stroke="#6e6e6e" stroke-width="1" />
<line x1="1752.0" y1="846.4" x2="935.1" y2="1262.0" stroke="#6e6e6e" stroke-width="1" />
<line x1="1752.0" y1="869.2" x2="968.3" y2="1262.0" stroke="#6e6e6e" stroke-width="1" />
<line x1="1752.0" y1="891.1" x2="1001.1" y2="1262.0" stroke="#6e6e6e" stroke-width="1" />
<line x1="1752.0" y1="912.2" x2="1033.6" y2="1262.0" stroke="#6e6e6e" stroke-width="1" />
<line x1="1752.0" y1="932.4" x2="1065.7" y2="1262.0" stroke="#6e6e6e" stroke-width="1" />
<line x1="1752.0" y1="951.9" x2="1097.5" y2="1262.0" stroke="#6e6e6e" stroke-width="1" />
<line x1="1752.0" y1="970.7" x2="1128.9" y2="1262.0" stroke="#6e6e6e" stroke-width="1" />
<line x1="1752.0" y1="988.7" x2="1160.0" y2="1262.0" stroke="#6e6e6e" stroke-width="1" />
<line x1="1752.0" y1="1006.2" x2="1190.7" y2="1262.0" stroke="#6e6e6e" stroke-width="1" />
<line x1="1752.0" y1="1023.0" x2="1221.1" y2="1262.0" stroke="#6e6e6e" stroke-width="1" />
<line x1="1752.0" y1="1039.2" x2="1251.2" y2="1262.0" stroke="#6e6e6e" stroke-width="1" />
<line x1="1752.0" y1="1054.9" x2="1281.0" y2="1262.0" stroke="#6e6e6e" stroke-width="1" />
<line x1="1752.0" y1="1070.1" x2="1310.5" y2="1262.0" stroke="#6e6e6e" stroke-width="1" />
<line x1="1752.0" y1="1084.8" x2="1339.6" y2="1262.0" stroke="#6e6e6e" stroke-width="1" />
<line x1="1752.0" y1="1099.0" x2="1368.5" y2="1262.0" stroke="#6e6e6e" stroke-width="1" />
<line x1="1752.0" y1="1112.8" x2="1397.0" y2="1262.0" stroke="#6e6e6e" stroke-width="1" />
<line x1="1752.0" y1="1126.1" x2="1425.3" y2="1262.0" stroke="#6e6e6e" stroke-width="1" />
<line x1="1752.0" y1="1139.0" x2="1453.2" y2="1262.0" stroke="#6e6e6e" stroke-width="1" />
<line x1="1752.0" y1="1151.5" x2="1480.9" y2="1262.0" stroke="#6e6e6e" stroke-width="1" />
<line x1="1752.0" y1="1163.7" x2="1508.3" y2="1262.0" stroke="#6e6e6e" stroke-width="1" />
<line x1="1752.0" y1="1175.5" x2="1535.5" y2="1262.0" stroke="#6e6e6e" stroke-width="1" />
<line x1="1752.0" y1="1186.9" x2="1562.3" y2="1262.0" stroke="#6e6e6e" stroke-width="1" />
<line x1="1752.0" y1="1198.0" x2="1588.9" y2="1262.0" stroke="#6e6e6e" stroke-width="1" />
<line x1="1752.0" y1="1208.8" x2="1615.2" y2="1262.0" stroke="#6e6e6e" stroke-width="1" />
<line x1="1752.0" y1="1219.4" x2="1641.3" y2="1262.0" stroke="#6e6e6e" stroke-width="1" />
<line x1="1752.0" y1="1229.6" x2="1667.1" y2="1262.0" stroke="#6e6e6e" stroke-width="1" />
<line x1="1752.0" y1="1239.5" x2="1692.6" y2="1262.0" stroke="#6e6e6e" stroke-width="1" />
<line x1="1752.0" y1="1249.2" x2="1717.9" y2="1262.0" stroke="#6e6e6e" stroke-width="1" />
<line x1="1752.0" y1="1258.6" x2="1743.0" y2="1262.0" stroke="#6e6e6e" stroke-width="1" />
<line x1="1720.4" y1="694.0" x2="1752.0" y2="701.2" stroke="#6e6e6e" stroke-width="1" />
<line x1="1572.4" y1="694.0" x2="1752.0" y2="733.5" stroke="#6e6e6e" stroke-width="1" />
<line x1="1419.6" y1="694.0" x2="1752.0" y2="764.2" stroke="#6e6e6e" stroke-width="1" />
<line x1="1261.8" y1="694.0" x2="1752.0" y2="793.4" stroke="#6e6e6e" stroke-width="1" />
<line x1="1098.7" y1="694.0" x2="1752.0" y2="821.2" stroke="#6e6e6e" stroke-width="1" />
<line x1="930.0" y1="694.0" x2="1752.0" y2="847.8" stroke="#6e6e6e" stroke-width="1" />
<line x1="755.5" y1="694.0" x2="1752.0" y2="873.1" stroke="#6e6e6e" stroke-width="1" />
<line x1="574.9" y1="694.0" x2="1752.0" y2="897.3" stroke="#6e6e6e" stroke-width="1" />
<line x1="387.8" y1="694.0" x2="1752.0" y2="920.4" stroke="#6e6e6e" stroke-width="1" />
<line x1="193.9" y1="694.0" x2="1752.0" y2="942.6" stroke="#6e6e6e" stroke-width="1" />
<line x1="0.0" y1="695.1" x2="1752.0" y2="963.9" stroke="#6e6e6e" stroke-width="1" />
<line x1="0.0" y1="725.9" x2="1752.0" y2="984.2" stroke="#6e6e6e" stroke-width="1" />
<line x1="0.0" y1="755.4" x2="1752.0" y2="1003.8" stroke="#6e6e6e" stroke-width="1" />
<line x1="0.0" y1="783.7" x2="1752.0" y2="1022.6" stroke="#6e6e6e" stroke-width="1" />
<line x1="0.0" y1="811.0" x2="1752.0" y2="1040.7" stroke="#6e6e6e" stroke-width="1" />
<line x1="0.0" y1="837.3" x2="1752.0" y2="1058.1" stroke="#6e6e6e" stroke-width="1" />
<line x1="0.0" y1="862.6" x2="1752.0" y2="1074.9" stroke="#6e6e6e" stroke-width="1" />
<line x1="0.0" y1="886.9" x2="1752.0" y2="1091.0" stroke="#6e6e6e" stroke-width="1" />
<line x1="0.0" y1="910.4" x2="1752.0" y2="1106.6" stroke="#6e6e6e" stroke-width="1" />
<line x1="0.0" y1="933.1" x2="1752.0" y2="1121.7" stroke="#6e6e6e" stroke-width="1" />
<line x1="0.0" y1="955.0" x2="1752.0" y2="1136.2" stroke="#6e6e6e" stroke-width="1" />
<line x1="0.0" y1="976.1" x2="1752.0" y2="1150.2" stroke="#6e6e6e" stroke-width="1" />
<line x1="0.0" y1="996.6" x2="1752.0" y2="1163.8" stroke="#6e6e6e" stroke-width="1" />
<line x1="0.0" y1="1016.4" x2="1752.0" y2="1176.9" stroke="#6e6e6e" stroke-width="1" />
<line x1="0.0" y1="1035.5" x2="1752.0" y2="1189.6" stroke="#6e6e6e" stroke-width="1" />
<line x1="0.0" y1="1054.1" x2="1752.0" y2="1201.9" stroke="#6e6e6e" stroke-width="1" />
<line x1="0.0" y1="1072.0" x2="1752.0" y2="1213.8" stroke="#6e6e6e" stroke-width="1" />
<line x1="0.0" y1="1089.5" x2="1752.0" y2="1225.4" stroke="#6e6e6e" stroke-width="1" />
<line x1="0.0" y1="1106.3" x2="1752.0" y2="1236.5" stroke="#6e6e6e" stroke-width="1" />
<line x1="0.0" y1="1122.7" x2="1752.0" y2="1247.4" stroke="#6e6e6e" stroke-width="1" />
<line x1="0.0" y1="1138.6" x2="1752.0" y2="1258.0" stroke="#6e6e6e" stroke-width="1" />
<line x1="0.0" y1="1154.1" x2="1656.8" y2="1262.0" stroke="#6e6e6e" stroke-width="1" />
<line x1="0.0" y1="1169.1" x2="1492.6" y2="1262.0" stroke="#6e6e6e" stroke-width="1" />
<line x1="0.0" y1="1183.7" x2="1317.7" y2="1262.0" stroke="#6e6e6e" stroke-width="1" />
<line x1="0.0" y1="1197.8" x2="1131.1" y2="1262.0" stroke="#6e6e6e" stroke-width="1" />
<line x1="0.0" y1="1211.6" x2="931.5" y2="1262.0" stroke="#6e6e6e" stroke-width="1" />
<line x1="0.0" y1="1225.1" x2="717.6" y2="1262.0" stroke="#6e6e6e" stroke-width="1" />
<line x1="0.0" y1="1238.1" x2="487.7" y2="1262.0" stroke="#6e6e6e" stroke-width="1" />
<line x1="0.0" y1="1250.8" x2="240.0" y2="1262.0" stroke="#6e6e6e" stroke-width="1" /></g>
<g clip-path="url(#mclipB)" opacity="0.6"><line x1="0.0" y1="1065.0" x2="1752.0" y2="1233.9" stroke="#c04a50" stroke-width="1.2" /><line x1="450.0" y1="1262.0" x2="1752.0" y2="800.7" stroke="#6a9a2a" stroke-width="1.2" /></g>
<line x1="788.0" y1="1130.0" x2="788.0" y2="1050.0" stroke="#3b7de0" stroke-width="2" />
<polygon points="788,1038 782,1056 794,1056" fill="#3b7de0"/>
<line x1="787.0" y1="1130.0" x2="728.0" y2="1125.0" stroke="#e0404a" stroke-width="2" />
<polygon points="714,1124 730,1118 730,1131" fill="#e0404a"/>
<line x1="787.0" y1="1130.0" x2="828.0" y2="1114.0" stroke="#7ac02c" stroke-width="2" />
<polygon points="842,1110 826,1108 830,1120" fill="#7ac02c"/>
<rect x="746" y="1076" width="9" height="10" fill="#6aa02c" opacity="0.7"/>
<rect x="810" y="1072" width="8" height="10" fill="#c04040" opacity="0.6"/>
<circle cx="787" cy="1130" r="15" fill="none" stroke="#e8e8e8" stroke-width="1.6"/>
<circle cx="787" cy="1140" r="9" fill="none" stroke="#ddd" stroke-width="1.3" stroke-dasharray="3 3"/>
<line x1="787.0" y1="1118.0" x2="787.0" y2="1160.0" stroke="#111" stroke-width="1" /><line x1="769.0" y1="1141.0" x2="805.0" y2="1141.0" stroke="#111" stroke-width="1" />
</svg></div>
<div class="abs" style="left:0px;top:0px;width:2495px;height:3px;background:#141414;"></div>
<div class="abs" style="left:0px;top:3px;width:1771px;height:27px;background:#2f2f2f;border-top:1px solid #3a3a3a"></div>
<div class="abs" style="left:89px;top:5px;width:60px;height:18px;background:#262626;border-radius:4px;border:1px solid #383838"></div>
<svg class="abs" style="left:92px;top:6px;" width="18" height="16" viewBox="0 0 18 16"><path d="M3,8 H9 L14,3 M9,8 L14,13" fill="none" stroke="#ddd" stroke-width="1.3"/><path d="M3,8 l3,-2.5 M3,8 l3,2.5" stroke="#ddd" stroke-width="1.3"/><path d="M12,2 h3 v3 M15,11 v3 h-3" fill="none" stroke="#ddd" stroke-width="1.1"/></svg>
<div class="abs t" style="left:113px;top:6.8px;font-size:12px;line-height:14.4px;color:#e0e0e0;">局部</div>
<svg class="abs" style="left:138.5px;top:10.25px;" width="9.0" height="7.5" viewBox="0 0 9.0 7.5"><path d="M1,2 L4.5,5.5 L8.0,2" fill="none" stroke="#ddd" stroke-width="1.3"/></svg>
<div class="abs" style="left:156px;top:5px;width:30px;height:18px;background:#262626;border-radius:4px;border:1px solid #383838"></div>
<svg class="abs" style="left:159px;top:6px;" width="16" height="16" viewBox="0 0 16 16"><circle cx="5" cy="11" r="3.6" fill="none" stroke="#ddd" stroke-width="1.2"/><circle cx="5" cy="11" r="1.2" fill="#ddd"/><circle cx="10" cy="5.5" r="3.6" fill="none" stroke="#ddd" stroke-width="1.2"/><circle cx="10" cy="5.5" r="1.2" fill="#ddd"/></svg>
<svg class="abs" style="left:175.5px;top:10.25px;" width="9.0" height="7.5" viewBox="0 0 9.0 7.5"><path d="M1,2 L4.5,5.5 L8.0,2" fill="none" stroke="#ddd" stroke-width="1.3"/></svg>
<div class="abs" style="left:193px;top:5px;width:50px;height:18px;background:#262626;border-radius:4px;border:1px solid #383838"></div>
<div class="abs" style="left:193px;top:5px;width:18px;height:18px;background:#474747;border-radius:4px 0 0 4px"></div>
<svg class="abs" style="left:195px;top:6px;" width="15" height="16" viewBox="0 0 15 16"><path d="M4,10 A4.5,4.5 0 1 1 12,7 L8,13" fill="none" stroke="#aaa" stroke-width="2.2"/></svg>
<svg class="abs" style="left:214px;top:7px;" width="14" height="14" viewBox="0 0 14 14"><rect x="1" y="1" width="4" height="4" fill="#eee"/><rect x="8" y="1" width="4" height="4" fill="#eee"/><rect x="1" y="8" width="4" height="4" fill="#eee"/><rect x="8" y="8" width="4" height="4" fill="#eee"/></svg>
<svg class="abs" style="left:232.5px;top:10.25px;" width="9.0" height="7.5" viewBox="0 0 9.0 7.5"><path d="M1,2 L4.5,5.5 L8.0,2" fill="none" stroke="#ddd" stroke-width="1.3"/></svg>
<div class="abs" style="left:250px;top:5px;width:50px;height:18px;background:#262626;border-radius:4px;border:1px solid #383838"></div>
<div class="abs" style="left:250px;top:5px;width:18px;height:18px;background:#474747;border-radius:4px 0 0 4px"></div>
<svg class="abs" style="left:251px;top:6px;" width="16" height="16" viewBox="0 0 16 16"><circle cx="8" cy="8" r="5.5" fill="none" stroke="#aaa" stroke-width="1"/><circle cx="8" cy="8" r="1.8" fill="#eee"/></svg>
<svg class="abs" style="left:272px;top:6px;" width="16" height="16" viewBox="0 0 16 16"><path d="M1,14 C5,14 5,2 8,2 C11,2 11,14 15,14" fill="none" stroke="#777" stroke-width="1"/></svg>
<svg class="abs" style="left:289.5px;top:10.25px;" width="9.0" height="7.5" viewBox="0 0 9.0 7.5"><path d="M1,2 L4.5,5.5 L8.0,2" fill="none" stroke="#666" stroke-width="1.3"/></svg>
<div class="abs" style="left:170px;top:30px;width:48px;height:24px;background:#2c2c2c;border-radius:0 0 5px 5px"></div>
<svg class="abs" style="left:181.25px;top:35.5px;" width="7.5" height="9.0" viewBox="0 0 7.5 9.0"><path d="M2,1 L5.5,4.5 L2,8.0" fill="none" stroke="#ddd" stroke-width="1.3"/></svg>
<svg class="abs" style="left:194px;top:32px;" width="16" height="18" viewBox="0 0 16 18"><defs><linearGradient id="hx0" x1="0" y1="0" x2="1" y2="1"><stop offset="0" stop-color="#1a9ee8"/><stop offset="0.5" stop-color="#3cc050"/><stop offset="1" stop-color="#f02020"/></linearGradient></defs><polygon points="8,1 15,5 15,13 8,17 1,13 1,5" fill="url(#hx0)"/></svg>
<div class="abs" style="left:1517px;top:5px;width:30px;height:18px;background:#262626;border-radius:4px;border:1px solid #383838"></div>
<svg class="abs" style="left:1518px;top:5px;" width="18" height="18" viewBox="0 0 18 18"><path d="M7,8 C9,5 14,5 16,8 C14,11 9,11 7,8Z" fill="none" stroke="#eee" stroke-width="1.2"/><circle cx="11.5" cy="8" r="1.5" fill="#eee"/><path d="M2,11 L9,13 L6,14 L5,17Z" fill="#eee"/></svg>
<svg class="abs" style="left:1536.5px;top:10.25px;" width="9.0" height="7.5" viewBox="0 0 9.0 7.5"><path d="M1,2 L4.5,5.5 L8.0,2" fill="none" stroke="#ddd" stroke-width="1.3"/></svg>
<div class="abs" style="left:1554px;top:5px;width:38px;height:18px;background:#262626;border-radius:4px;border:1px solid #383838"></div>
<div class="abs" style="left:1554px;top:5px;width:18px;height:18px;background:#4772b3;border-radius:4px 0 0 4px"></div>
<svg class="abs" style="left:1555px;top:6px;" width="16" height="16" viewBox="0 0 16 16"><path d="M2,4 C8,4 12,8 12,15" fill="none" stroke="#fff" stroke-width="1.1"/><circle cx="3.5" cy="12.5" r="1.7" fill="none" stroke="#fff" stroke-width="1.1"/><path d="M5,11 L13,3 M9,3 h4 v4" fill="none" stroke="#fff" stroke-width="1.1"/></svg>
<svg class="abs" style="left:1577.5px;top:10.25px;" width="9.0" height="7.5" viewBox="0 0 9.0 7.5"><path d="M1,2 L4.5,5.5 L8.0,2" fill="none" stroke="#ddd" stroke-width="1.3"/></svg>
<div class="abs" style="left:1599px;top:5px;width:38px;height:18px;background:#262626;border-radius:4px;border:1px solid #383838"></div>
<div class="abs" style="left:1599px;top:5px;width:18px;height:18px;background:#4772b3;border-radius:4px 0 0 4px"></div>
<svg class="abs" style="left:1600px;top:6px;" width="16" height="16" viewBox="0 0 16 16"><circle cx="10" cy="6" r="4.5" fill="#fff"/><path d="M4,7 A5,5 0 1 0 11,12" fill="none" stroke="#fff" stroke-width="1.2"/></svg>
<svg class="abs" style="left:1622.5px;top:10.25px;" width="9.0" height="7.5" viewBox="0 0 9.0 7.5"><path d="M1,2 L4.5,5.5 L8.0,2" fill="none" stroke="#ddd" stroke-width="1.3"/></svg>
<div class="abs" style="left:1644px;top:5px;width:18px;height:18px;background:#34496b;border-radius:4px"></div>
<svg class="abs" style="left:1645px;top:6px;" width="16" height="16" viewBox="0 0 16 16"><rect x="2" y="5" width="9" height="9" fill="none" stroke="#5a76a0" stroke-width="1"/><rect x="5" y="2" width="9" height="9" fill="none" stroke="#5a76a0" stroke-width="1"/></svg>
<div class="abs" style="left:1669px;top:5px;width:96px;height:18px;background:#262626;border-radius:4px;border:1px solid #383838"></div>
<div class="abs" style="left:1669px;top:5px;width:18px;height:18px;background:#474747;border-radius:4px 0 0 4px"></div>
<div class="abs" style="left:1688px;top:5px;width:18px;height:18px;background:#474747;"></div>
<div class="abs" style="left:1707px;top:5px;width:18px;height:18px;background:#4772b3;"></div>
<div class="abs" style="left:1726px;top:5px;width:18px;height:18px;background:#474747;"></div>
<svg class="abs" style="left:1670px;top:6px;" width="16" height="16" viewBox="0 0 16 16"><circle cx="8" cy="8" r="6" fill="none" stroke="#ddd" stroke-width="1.1"/><ellipse cx="8" cy="8" rx="2.5" ry="6" fill="none" stroke="#ddd" stroke-width="1"/><path d="M2,8 H14" stroke="#ddd" stroke-width="1"/></svg>
<svg class="abs" style="left:1689px;top:6px;" width="16" height="16" viewBox="0 0 16 16"><circle cx="8" cy="8" r="6.3" fill="#b0b0b0"/></svg>
<svg class="abs" style="left:1708px;top:6px;" width="16" height="16" viewBox="0 0 16 16"><circle cx="8" cy="8" r="6.3" fill="#fff"/><path d="M8,8 V1.7 A6.3,6.3 0 0 1 14.3,8Z M8,8 H14.3 A6.3,6.3 0 0 1 4,13" fill="#4772b3"/></svg>
<svg class="abs" style="left:1727px;top:6px;" width="16" height="16" viewBox="0 0 16 16"><circle cx="8" cy="8" r="6" fill="none" stroke="#ccc" stroke-width="1.1"/><path d="M4,6 A4,4 0 0 1 7,3.5" fill="none" stroke="#ccc" stroke-width="1"/></svg>
<svg class="abs" style="left:1749.5px;top:10.25px;" width="9.0" height="7.5" viewBox="0 0 9.0 7.5"><path d="M1,2 L4.5,5.5 L8.0,2" fill="none" stroke="#ddd" stroke-width="1.3"/></svg>
<div class="abs" style="left:1502px;top:30px;width:244px;height:412px;background:rgba(52,52,52,0.92);border-radius:5px"></div>
<svg class="abs" style="left:1509.5px;top:65.25px;" width="9.0" height="7.5" viewBox="0 0 9.0 7.5"><path d="M1,2 L4.5,5.5 L8.0,2" fill="none" stroke="#ddd" stroke-width="1.3"/></svg>
<div class="abs t" style="left:1524px;top:61.8px;font-size:12px;line-height:14.4px;color:#e0e0e0;">变换</div>
<svg class="abs" style="left:1724px;top:64px;" width="14" height="10" viewBox="0 0 14 10"><rect x="1.0" y="1" width="1" height="1" fill="#999"/><rect x="1.0" y="6" width="1" height="1" fill="#999"/><rect x="4.3" y="1" width="1" height="1" fill="#999"/><rect x="4.3" y="6" width="1" height="1" fill="#999"/><rect x="7.6" y="1" width="1" height="1" fill="#999"/><rect x="7.6" y="6" width="1" height="1" fill="#999"/><rect x="10.9" y="1" width="1" height="1" fill="#999"/><rect x="10.9" y="6" width="1" height="1" fill="#999"/></svg>
<div class="abs t" style="left:1510px;top:91.8px;font-size:12px;line-height:14.4px;color:#cfcfcf;">位置:</div>
<div class="abs" style="left:1510px;top:109.6px;width:174px;height:58.400000000000006px;background:#2f2f2f;border-radius:4px"></div>
<div class="abs" style="left:1510px;top:109.89999999999999px;width:174px;height:18.4px;background:#4e4e4e;border-radius:4px 4px 0 0"></div>
<div class="abs t" style="left:1523px;top:111.9px;font-size:12px;line-height:14.4px;color:#e8e8e8;">X</div>
<div class="abs t" style="right:824px;top:111.9px;font-size:12px;line-height:14.4px;color:#e8e8e8;text-align:right;">0 m</div>
<svg class="abs" style="left:1706px;top:111.6px;" width="16" height="15" viewBox="0 0 16 15"><path d="M2.5,6 V4.5 A3.2,3.2 0 0 1 8.9,4.5" fill="none" stroke="#b0b0b0" stroke-width="1.2"/><rect x="5.5" y="7" width="9" height="6.5" fill="none" stroke="#b0b0b0" stroke-width="1.2"/><rect x="9.2" y="9.6" width="1.6" height="1.6" fill="#b0b0b0"/></svg>
<div class="abs" style="left:1510px;top:129.4px;width:174px;height:18.4px;background:#4e4e4e;"></div>
<div class="abs t" style="left:1523px;top:131.4px;font-size:12px;line-height:14.4px;color:#e8e8e8;">Y</div>
<div class="abs t" style="right:824px;top:131.4px;font-size:12px;line-height:14.4px;color:#e8e8e8;text-align:right;">0 m</div>
<svg class="abs" style="left:1706px;top:131.1px;" width="16" height="15" viewBox="0 0 16 15"><path d="M2.5,6 V4.5 A3.2,3.2 0 0 1 8.9,4.5" fill="none" stroke="#b0b0b0" stroke-width="1.2"/><rect x="5.5" y="7" width="9" height="6.5" fill="none" stroke="#b0b0b0" stroke-width="1.2"/><rect x="9.2" y="9.6" width="1.6" height="1.6" fill="#b0b0b0"/></svg>
<div class="abs" style="left:1510px;top:149.3px;width:174px;height:18.4px;background:#4e4e4e;border-radius:0 0 4px 4px"></div>
<div class="abs t" style="left:1523px;top:151.3px;font-size:12px;line-height:14.4px;color:#e8e8e8;">Z</div>
<div class="abs t" style="right:824px;top:151.3px;font-size:12px;line-height:14.4px;color:#e8e8e8;text-align:right;">0 m</div>
<svg class="abs" style="left:1706px;top:151.0px;" width="16" height="15" viewBox="0 0 16 15"><path d="M2.5,6 V4.5 A3.2,3.2 0 0 1 8.9,4.5" fill="none" stroke="#b0b0b0" stroke-width="1.2"/><rect x="5.5" y="7" width="9" height="6.5" fill="none" stroke="#b0b0b0" stroke-width="1.2"/><rect x="9.2" y="9.6" width="1.6" height="1.6" fill="#b0b0b0"/></svg>
<div class="abs t" style="left:1510px;top:173.8px;font-size:12px;line-height:14.4px;color:#cfcfcf;">旋转:</div>
<div class="abs" style="left:1510px;top:191.5px;width:174px;height:58.599999999999994px;background:#2f2f2f;border-radius:4px"></div>
<div class="abs" style="left:1510px;top:191.8px;width:174px;height:18.4px;background:#4e4e4e;border-radius:4px 4px 0 0"></div>
<div class="abs t" style="left:1523px;top:193.8px;font-size:12px;line-height:14.4px;color:#e8e8e8;">X</div>
<div class="abs t" style="right:824px;top:193.8px;font-size:12px;line-height:14.4px;color:#e8e8e8;text-align:right;">0°</div>
<svg class="abs" style="left:1706px;top:193.5px;" width="16" height="15" viewBox="0 0 16 15"><path d="M2.5,6 V4.5 A3.2,3.2 0 0 1 8.9,4.5" fill="none" stroke="#b0b0b0" stroke-width="1.2"/><rect x="5.5" y="7" width="9" height="6.5" fill="none" stroke="#b0b0b0" stroke-width="1.2"/><rect x="9.2" y="9.6" width="1.6" height="1.6" fill="#b0b0b0"/></svg>
<div class="abs" style="left:1510px;top:211.4px;width:174px;height:18.4px;background:#4e4e4e;"></div>
<div class="abs t" style="left:1523px;top:213.4px;font-size:12px;line-height:14.4px;color:#e8e8e8;">Y</div>
<div class="abs t" style="right:824px;top:213.4px;font-size:12px;line-height:14.4px;color:#e8e8e8;text-align:right;">0°</div>
<svg class="abs" style="left:1706px;top:213.1px;" width="16" height="15" viewBox="0 0 16 15"><path d="M2.5,6 V4.5 A3.2,3.2 0 0 1 8.9,4.5" fill="none" stroke="#b0b0b0" stroke-width="1.2"/><rect x="5.5" y="7" width="9" height="6.5" fill="none" stroke="#b0b0b0" stroke-width="1.2"/><rect x="9.2" y="9.6" width="1.6" height="1.6" fill="#b0b0b0"/></svg>
<div class="abs" style="left:1510px;top:231.4px;width:174px;height:18.4px;background:#4e4e4e;border-radius:0 0 4px 4px"></div>
<div class="abs t" style="left:1523px;top:233.4px;font-size:12px;line-height:14.4px;color:#e8e8e8;">Z</div>
<div class="abs t" style="right:824px;top:233.4px;font-size:12px;line-height:14.4px;color:#e8e8e8;text-align:right;">0°</div>
<svg class="abs" style="left:1706px;top:233.1px;" width="16" height="15" viewBox="0 0 16 15"><path d="M2.5,6 V4.5 A3.2,3.2 0 0 1 8.9,4.5" fill="none" stroke="#b0b0b0" stroke-width="1.2"/><rect x="5.5" y="7" width="9" height="6.5" fill="none" stroke="#b0b0b0" stroke-width="1.2"/><rect x="9.2" y="9.6" width="1.6" height="1.6" fill="#b0b0b0"/></svg>
<div class="abs" style="left:1510px;top:254px;width:226px;height:18px;background:#282828;border-radius:4px"></div>
<div class="abs t" style="left:1518px;top:255.8px;font-size:12px;line-height:14.4px;color:#c8c8c8;">XYZ 欧拉</div>
<svg class="abs" style="left:1725.5px;top:259.25px;" width="9.0" height="7.5" viewBox="0 0 9.0 7.5"><path d="M1,2 L4.5,5.5 L8.0,2" fill="none" stroke="#ddd" stroke-width="1.3"/></svg>
<div class="abs" style="left:1493px;top:275px;width:248px;height:86px;background:#9a6419;border:1px solid #fff"></div>
<div class="abs t" style="left:1510px;top:277.8px;font-size:12px;line-height:14.4px;color:#e9b673;">缩放:</div>
<div class="abs" style="left:1510px;top:295.1px;width:174px;height:57.89999999999998px;background:#94601a;border-radius:4px"></div>
<div class="abs" style="left:1510px;top:295.40000000000003px;width:174px;height:18.4px;background:#a5702b;border-radius:4px 4px 0 0"></div>
<div class="abs t" style="left:1523px;top:297.4px;font-size:12px;line-height:14.4px;color:#f3c88e;">X</div>
<div class="abs t" style="right:824px;top:297.4px;font-size:12px;line-height:14.4px;color:#f3c88e;text-align:right;">18.000</div>
<svg class="abs" style="left:1706px;top:297.1px;" width="16" height="15" viewBox="0 0 16 15"><path d="M2.5,6 V4.5 A3.2,3.2 0 0 1 8.9,4.5" fill="none" stroke="#e8b26c" stroke-width="1.2"/><rect x="5.5" y="7" width="9" height="6.5" fill="none" stroke="#e8b26c" stroke-width="1.2"/><rect x="9.2" y="9.6" width="1.6" height="1.6" fill="#e8b26c"/></svg>
<div class="abs" style="left:1510px;top:314.8px;width:174px;height:18.4px;background:#a5702b;"></div>
<div class="abs t" style="left:1523px;top:316.8px;font-size:12px;line-height:14.4px;color:#f3c88e;">Y</div>
<div class="abs t" style="right:824px;top:316.8px;font-size:12px;line-height:14.4px;color:#f3c88e;text-align:right;">11.000</div>
<svg class="abs" style="left:1706px;top:316.5px;" width="16" height="15" viewBox="0 0 16 15"><path d="M2.5,6 V4.5 A3.2,3.2 0 0 1 8.9,4.5" fill="none" stroke="#e8b26c" stroke-width="1.2"/><rect x="5.5" y="7" width="9" height="6.5" fill="none" stroke="#e8b26c" stroke-width="1.2"/><rect x="9.2" y="9.6" width="1.6" height="1.6" fill="#e8b26c"/></svg>
<div class="abs" style="left:1510px;top:334.3px;width:174px;height:18.4px;background:#a5702b;border-radius:0 0 4px 4px"></div>
<div class="abs t" style="left:1523px;top:336.3px;font-size:12px;line-height:14.4px;color:#f3c88e;">Z</div>
<div class="abs t" style="right:824px;top:336.3px;font-size:12px;line-height:14.4px;color:#f3c88e;text-align:right;">1.000</div>
<svg class="abs" style="left:1706px;top:336.0px;" width="16" height="15" viewBox="0 0 16 15"><path d="M2.5,6 V4.5 A3.2,3.2 0 0 1 8.9,4.5" fill="none" stroke="#e8b26c" stroke-width="1.2"/><rect x="5.5" y="7" width="9" height="6.5" fill="none" stroke="#e8b26c" stroke-width="1.2"/><rect x="9.2" y="9.6" width="1.6" height="1.6" fill="#e8b26c"/></svg>
<div class="abs t" style="left:1510px;top:359.8px;font-size:12px;line-height:14.4px;color:#cfcfcf;">尺寸:</div>
<div class="abs" style="left:1510px;top:377.0px;width:226px;height:58.10000000000002px;background:#2f2f2f;border-radius:4px"></div>
<div class="abs" style="left:1510px;top:377.3px;width:226px;height:18.4px;background:#4e4e4e;border-radius:4px 4px 0 0"></div>
<div class="abs t" style="left:1523px;top:379.3px;font-size:12px;line-height:14.4px;color:#e8e8e8;">X</div>
<div class="abs t" style="right:772px;top:379.3px;font-size:12px;line-height:14.4px;color:#e8e8e8;text-align:right;">36 m</div>
<div class="abs" style="left:1510px;top:396.8px;width:226px;height:18.4px;background:#4e4e4e;"></div>
<div class="abs t" style="left:1523px;top:398.8px;font-size:12px;line-height:14.4px;color:#e8e8e8;">Y</div>
<div class="abs t" style="right:772px;top:398.8px;font-size:12px;line-height:14.4px;color:#e8e8e8;text-align:right;">16.5 m</div>
<div class="abs" style="left:1510px;top:416.40000000000003px;width:226px;height:18.4px;background:#4e4e4e;border-radius:0 0 4px 4px"></div>
<div class="abs t" style="left:1523px;top:418.4px;font-size:12px;line-height:14.4px;color:#e8e8e8;">Z</div>
<div class="abs t" style="right:772px;top:418.4px;font-size:12px;line-height:14.4px;color:#e8e8e8;text-align:right;">5.8 m</div>
<div class="abs t" style="left:1493px;top:257.0px;font-size:15px;line-height:18.0px;color:#fff;font-weight:bold;text-shadow:0 0 2px #000,1px 1px 1px #000,-1px -1px 1px #000;letter-spacing:-0.2px">JimmyWong.cn</div>
<div class="abs" style="left:1752px;top:55px;width:17px;height:637px;background:#1d1d1d;"></div>
<div class="abs" style="left:1769px;top:0px;width:7px;height:692px;background:#161616;"></div>
<div class="abs" style="left:1752px;top:59.5px;width:17px;height:36.900000000000006px;background:#2a2a2a;border-radius:0 4px 4px 0;border:1px solid #363636;border-left:none"></div>
<div class="abs t" style="left:1752px;top:59.5px;width:17px;height:36.900000000000006px;display:flex;align-items:center;justify-content:center;"><div style="transform:rotate(90deg);white-space:nowrap;font-size:12px;color:#d6d6d6;line-height:12px">条目</div></div>
<div class="abs" style="left:1752px;top:101.7px;width:17px;height:36.3px;background:#2a2a2a;border-radius:0 4px 4px 0;border:1px solid #363636;border-left:none"></div>
<div class="abs t" style="left:1752px;top:101.7px;width:17px;height:36.3px;display:flex;align-items:center;justify-content:center;"><div style="transform:rotate(90deg);white-space:nowrap;font-size:12px;color:#d6d6d6;line-height:12px">工具</div></div>
<div class="abs" style="left:1752px;top:143.3px;width:17px;height:36.69999999999999px;background:#2a2a2a;border-radius:0 4px 4px 0;border:1px solid #363636;border-left:none"></div>
<div class="abs t" style="left:1752px;top:143.3px;width:17px;height:36.69999999999999px;display:flex;align-items:center;justify-content:center;"><div style="transform:rotate(90deg);white-space:nowrap;font-size:12px;color:#d6d6d6;line-height:12px">视图</div></div>
<div class="abs" style="left:1752px;top:185.7px;width:17px;height:69.10000000000002px;background:#2a2a2a;border-radius:0 4px 4px 0;border:1px solid #363636;border-left:none"></div>
<div class="abs t" style="left:1752px;top:185.7px;width:17px;height:69.10000000000002px;display:flex;align-items:center;justify-content:center;"><div style="transform:rotate(90deg);white-space:nowrap;font-size:12px;color:#d6d6d6;line-height:12px">BlenderKit</div></div>
<div class="abs" style="left:1752px;top:260.7px;width:17px;height:45.30000000000001px;background:#2a2a2a;border-radius:0 4px 4px 0;border:1px solid #363636;border-left:none"></div>
<div class="abs t" style="left:1752px;top:260.7px;width:17px;height:45.30000000000001px;display:flex;align-items:center;justify-content:center;"><div style="transform:rotate(90deg);white-space:nowrap;font-size:12px;color:#d6d6d6;line-height:12px">Lehuye</div></div>
<div class="abs" style="left:1710px;top:30px;width:59px;height:24px;background:#303030;border-radius:0 0 0 6px"></div>
<div class="abs" style="left:1718px;top:32px;width:46px;height:18px;background:#262626;border-radius:4px;border:1px solid #383838"></div>
<div class="abs t" style="left:1726px;top:33.8px;font-size:12px;line-height:14.4px;color:#e0e0e0;">选项</div>
<svg class="abs" style="left:1752.5px;top:37.25px;" width="9.0" height="7.5" viewBox="0 0 9.0 7.5"><path d="M1,2 L4.5,5.5 L8.0,2" fill="none" stroke="#ddd" stroke-width="1.3"/></svg>
<svg class="abs" style="left:0;top:0" width="1771" height="1262"><circle cx="1468.5" cy="103.7" r="7" fill="none" stroke="#a33040" stroke-width="1.3"/><circle cx="1423" cy="103.7" r="7" fill="none" stroke="#5f9a20" stroke-width="1.3"/><line x1="1442.8" y1="103.7" x2="1442.8" y2="71.8" stroke="#3a78d8" stroke-width="2"/><line x1="1442.8" y1="103.7" x2="1417" y2="103.7" stroke="#e8384f" stroke-width="2"/><line x1="1442.8" y1="103.7" x2="1462.3" y2="103.7" stroke="#7ac822" stroke-width="2"/><circle cx="1442.8" cy="135.4" r="7.3" fill="#2d4466" stroke="#3a78d8" stroke-width="1.4"/><circle cx="1442.8" cy="71.8" r="8" fill="#2f78dd"/><text x="1442.8" y="75.8" font-family="Liberation Sans" font-size="11" font-weight="bold" text-anchor="middle" fill="#1a1a1a">Z</text><circle cx="1417" cy="103.7" r="8" fill="#e8384f"/><text x="1417" y="107.7" font-family="Liberation Sans" font-size="11" font-weight="bold" text-anchor="middle" fill="#1a1a1a">X</text><circle cx="1462.3" cy="103.7" r="8" fill="#78c81e"/><text x="1462.3" y="107.7" font-family="Liberation Sans" font-size="11" font-weight="bold" text-anchor="middle" fill="#1a1a1a">Y</text></svg>
<div class="abs" style="left:1457px;top:145px;width:28px;height:28px;background:rgba(40,40,40,0.85);border-radius:50%"></div>
<div class="abs" style="left:1457px;top:174.6px;width:28px;height:28px;background:rgba(40,40,40,0.85);border-radius:50%"></div>
<div class="abs" style="left:1457px;top:204.3px;width:28px;height:28px;background:rgba(40,40,40,0.85);border-radius:50%"></div>
<div class="abs" style="left:1457px;top:234.5px;width:28px;height:28px;background:rgba(40,40,40,0.85);border-radius:50%"></div>
<svg class="abs" style="left:0;top:0" width="1771" height="1262"><circle cx="1472" cy="158" r="5.5" fill="#d8d8d8"/><path d="M1472,155 v6 M1469,158 h6" stroke="#222" stroke-width="1.2"/><path d="M1468,162 l-5,5" stroke="#d8d8d8" stroke-width="2.2"/><path d="M1465,187.6 C1465,194.6 1468,196.6 1472,196.6 C1476,196.6 1478,192.6 1478,186.6 V182.6 M1468,188.6 V180.6 M1471,187.6 V179.6 M1474,187.6 V180.6 M1477,188.6 V182.6" fill="#d8d8d8" stroke="#d8d8d8" stroke-width="2.4" stroke-linecap="round"/><circle cx="1467" cy="214.3" r="3.3" fill="none" stroke="#d8d8d8" stroke-width="1.1"/><circle cx="1474" cy="213.3" r="3.6" fill="none" stroke="#d8d8d8" stroke-width="1.1"/><rect x="1466" y="219.3" width="8" height="6" fill="none" stroke="#d8d8d8" stroke-width="1.1"/><path d="M1475,222.3 l4,-3 v6z" fill="none" stroke="#d8d8d8" stroke-width="1"/><path d="M1466,242.5 h10 l3,12 h-16z M1465,246.5 h12 M1464,250.5 h14 M1469,242.5 l-1,12 M1473,242.5 l1,12" fill="none" stroke="#d8d8d8" stroke-width="1.1"/></svg>
<div class="abs" style="left:0px;top:695px;width:1752px;height:27px;background:#2f2f2f;"></div>
<div class="abs" style="left:89px;top:697px;width:60px;height:18px;background:#262626;border-radius:4px;border:1px solid #383838"></div>
<svg class="abs" style="left:92px;top:698px;" width="18" height="16" viewBox="0 0 18 16"><path d="M3,8 H9 L14,3 M9,8 L14,13" fill="none" stroke="#ddd" stroke-width="1.3"/><path d="M3,8 l3,-2.5 M3,8 l3,2.5" stroke="#ddd" stroke-width="1.3"/><path d="M12,2 h3 v3 M15,11 v3 h-3" fill="none" stroke="#ddd" stroke-width="1.1"/></svg>
<div class="abs t" style="left:113px;top:698.8px;font-size:12px;line-height:14.4px;color:#e0e0e0;">局部</div>
<svg class="abs" style="left:138.5px;top:702.25px;" width="9.0" height="7.5" viewBox="0 0 9.0 7.5"><path d="M1,2 L4.5,5.5 L8.0,2" fill="none" stroke="#ddd" stroke-width="1.3"/></svg>
<div class="abs" style="left:156px;top:697px;width:30px;height:18px;background:#262626;border-radius:4px;border:1px solid #383838"></div>
<svg class="abs" style="left:159px;top:698px;" width="16" height="16" viewBox="0 0 16 16"><circle cx="5" cy="11" r="3.6" fill="none" stroke="#ddd" stroke-width="1.2"/><circle cx="5" cy="11" r="1.2" fill="#ddd"/><circle cx="10" cy="5.5" r="3.6" fill="none" stroke="#ddd" stroke-width="1.2"/><circle cx="10" cy="5.5" r="1.2" fill="#ddd"/></svg>
<svg class="abs" style="left:175.5px;top:702.25px;" width="9.0" height="7.5" viewBox="0 0 9.0 7.5"><path d="M1,2 L4.5,5.5 L8.0,2" fill="none" stroke="#ddd" stroke-width="1.3"/></svg>
<div class="abs" style="left:193px;top:697px;width:50px;height:18px;background:#262626;border-radius:4px;border:1px solid #383838"></div>
<div class="abs" style="left:193px;top:697px;width:18px;height:18px;background:#474747;border-radius:4px 0 0 4px"></div>
<svg class="abs" style="left:195px;top:698px;" width="15" height="16" viewBox="0 0 15 16"><path d="M4,10 A4.5,4.5 0 1 1 12,7 L8,13" fill="none" stroke="#aaa" stroke-width="2.2"/></svg>
<svg class="abs" style="left:214px;top:699px;" width="14" height="14" viewBox="0 0 14 14"><rect x="1" y="1" width="4" height="4" fill="#eee"/><rect x="8" y="1" width="4" height="4" fill="#eee"/><rect x="1" y="8" width="4" height="4" fill="#eee"/><rect x="8" y="8" width="4" height="4" fill="#eee"/></svg>
<svg class="abs" style="left:232.5px;top:702.25px;" width="9.0" height="7.5" viewBox="0 0 9.0 7.5"><path d="M1,2 L4.5,5.5 L8.0,2" fill="none" stroke="#ddd" stroke-width="1.3"/></svg>
<div class="abs" style="left:250px;top:697px;width:50px;height:18px;background:#262626;border-radius:4px;border:1px solid #383838"></div>
<div class="abs" style="left:250px;top:697px;width:18px;height:18px;background:#474747;border-radius:4px 0 0 4px"></div>
<svg class="abs" style="left:251px;top:698px;" width="16" height="16" viewBox="0 0 16 16"><circle cx="8" cy="8" r="5.5" fill="none" stroke="#aaa" stroke-width="1"/><circle cx="8" cy="8" r="1.8" fill="#eee"/></svg>
<svg class="abs" style="left:272px;top:698px;" width="16" height="16" viewBox="0 0 16 16"><path d="M1,14 C5,14 5,2 8,2 C11,2 11,14 15,14" fill="none" stroke="#777" stroke-width="1"/></svg>
<svg class="abs" style="left:289.5px;top:702.25px;" width="9.0" height="7.5" viewBox="0 0 9.0 7.5"><path d="M1,2 L4.5,5.5 L8.0,2" fill="none" stroke="#666" stroke-width="1.3"/></svg>
<div class="abs" style="left:170px;top:722px;width:48px;height:24px;background:#2c2c2c;border-radius:0 0 5px 5px"></div>
<svg class="abs" style="left:181.25px;top:727.5px;" width="7.5" height="9.0" viewBox="0 0 7.5 9.0"><path d="M2,1 L5.5,4.5 L2,8.0" fill="none" stroke="#ddd" stroke-width="1.3"/></svg>
<svg class="abs" style="left:194px;top:724px;" width="16" height="18" viewBox="0 0 16 18"><defs><linearGradient id="hx692" x1="0" y1="0" x2="1" y2="1"><stop offset="0" stop-color="#1a9ee8"/><stop offset="0.5" stop-color="#3cc050"/><stop offset="1" stop-color="#f02020"/></linearGradient></defs><polygon points="8,1 15,5 15,13 8,17 1,13 1,5" fill="url(#hx692)"/></svg>
<div class="abs" style="left:1517px;top:697px;width:30px;height:18px;background:#262626;border-radius:4px;border:1px solid #383838"></div>
<svg class="abs" style="left:1518px;top:697px;" width="18" height="18" viewBox="0 0 18 18"><path d="M7,8 C9,5 14,5 16,8 C14,11 9,11 7,8Z" fill="none" stroke="#eee" stroke-width="1.2"/><circle cx="11.5" cy="8" r="1.5" fill="#eee"/><path d="M2,11 L9,13 L6,14 L5,17Z" fill="#eee"/></svg>
<svg class="abs" style="left:1536.5px;top:702.25px;" width="9.0" height="7.5" viewBox="0 0 9.0 7.5"><path d="M1,2 L4.5,5.5 L8.0,2" fill="none" stroke="#ddd" stroke-width="1.3"/></svg>
<div class="abs" style="left:1554px;top:697px;width:38px;height:18px;background:#262626;border-radius:4px;border:1px solid #383838"></div>
<div class="abs" style="left:1554px;top:697px;width:18px;height:18px;background:#4772b3;border-radius:4px 0 0 4px"></div>
<svg class="abs" style="left:1555px;top:698px;" width="16" height="16" viewBox="0 0 16 16"><path d="M2,4 C8,4 12,8 12,15" fill="none" stroke="#fff" stroke-width="1.1"/><circle cx="3.5" cy="12.5" r="1.7" fill="none" stroke="#fff" stroke-width="1.1"/><path d="M5,11 L13,3 M9,3 h4 v4" fill="none" stroke="#fff" stroke-width="1.1"/></svg>
<svg class="abs" style="left:1577.5px;top:702.25px;" width="9.0" height="7.5" viewBox="0 0 9.0 7.5"><path d="M1,2 L4.5,5.5 L8.0,2" fill="none" stroke="#ddd" stroke-width="1.3"/></svg>
<div class="abs" style="left:1599px;top:697px;width:38px;height:18px;background:#262626;border-radius:4px;border:1px solid #383838"></div>
<div class="abs" style="left:1599px;top:697px;width:18px;height:18px;background:#4772b3;border-radius:4px 0 0 4px"></div>
<svg class="abs" style="left:1600px;top:698px;" width="16" height="16" viewBox="0 0 16 16"><circle cx="10" cy="6" r="4.5" fill="#fff"/><path d="M4,7 A5,5 0 1 0 11,12" fill="none" stroke="#fff" stroke-width="1.2"/></svg>
<svg class="abs" style="left:1622.5px;top:702.25px;" width="9.0" height="7.5" viewBox="0 0 9.0 7.5"><path d="M1,2 L4.5,5.5 L8.0,2" fill="none" stroke="#ddd" stroke-width="1.3"/></svg>
<div class="abs" style="left:1644px;top:697px;width:18px;height:18px;background:#34496b;border-radius:4px"></div>
<svg class="abs" style="left:1645px;top:698px;" width="16" height="16" viewBox="0 0 16 16"><rect x="2" y="5" width="9" height="9" fill="none" stroke="#5a76a0" stroke-width="1"/><rect x="5" y="2" width="9" height="9" fill="none" stroke="#5a76a0" stroke-width="1"/></svg>
<div class="abs" style="left:1669px;top:697px;width:96px;height:18px;background:#262626;border-radius:4px;border:1px solid #383838"></div>
<div class="abs" style="left:1669px;top:697px;width:18px;height:18px;background:#474747;border-radius:4px 0 0 4px"></div>
<div class="abs" style="left:1688px;top:697px;width:18px;height:18px;background:#474747;"></div>
<div class="abs" style="left:1707px;top:697px;width:18px;height:18px;background:#4772b3;"></div>
<div class="abs" style="left:1726px;top:697px;width:18px;height:18px;background:#474747;"></div>
<svg class="abs" style="left:1670px;top:698px;" width="16" height="16" viewBox="0 0 16 16"><circle cx="8" cy="8" r="6" fill="none" stroke="#ddd" stroke-width="1.1"/><ellipse cx="8" cy="8" rx="2.5" ry="6" fill="none" stroke="#ddd" stroke-width="1"/><path d="M2,8 H14" stroke="#ddd" stroke-width="1"/></svg>
<svg class="abs" style="left:1689px;top:698px;" width="16" height="16" viewBox="0 0 16 16"><circle cx="8" cy="8" r="6.3" fill="#b0b0b0"/></svg>
<svg class="abs" style="left:1708px;top:698px;" width="16" height="16" viewBox="0 0 16 16"><circle cx="8" cy="8" r="6.3" fill="#fff"/><path d="M8,8 V1.7 A6.3,6.3 0 0 1 14.3,8Z M8,8 H14.3 A6.3,6.3 0 0 1 4,13" fill="#4772b3"/></svg>
<svg class="abs" style="left:1727px;top:698px;" width="16" height="16" viewBox="0 0 16 16"><circle cx="8" cy="8" r="6" fill="none" stroke="#ccc" stroke-width="1.1"/><path d="M4,6 A4,4 0 0 1 7,3.5" fill="none" stroke="#ccc" stroke-width="1"/></svg>
<svg class="abs" style="left:1749.5px;top:702.25px;" width="9.0" height="7.5" viewBox="0 0 9.0 7.5"><path d="M1,2 L4.5,5.5 L8.0,2" fill="none" stroke="#ddd" stroke-width="1.3"/></svg>
<div class="abs" style="left:1502px;top:722px;width:244px;height:412px;background:rgba(52,52,52,0.92);border-radius:5px"></div>
<svg class="abs" style="left:1509.5px;top:757.25px;" width="9.0" height="7.5" viewBox="0 0 9.0 7.5"><path d="M1,2 L4.5,5.5 L8.0,2" fill="none" stroke="#ddd" stroke-width="1.3"/></svg>
<div class="abs t" style="left:1524px;top:753.8px;font-size:12px;line-height:14.4px;color:#e0e0e0;">变换</div>
<svg class="abs" style="left:1724px;top:756px;" width="14" height="10" viewBox="0 0 14 10"><rect x="1.0" y="1" width="1" height="1" fill="#999"/><rect x="1.0" y="6" width="1" height="1" fill="#999"/><rect x="4.3" y="1" width="1" height="1" fill="#999"/><rect x="4.3" y="6" width="1" height="1" fill="#999"/><rect x="7.6" y="1" width="1" height="1" fill="#999"/><rect x="7.6" y="6" width="1" height="1" fill="#999"/><rect x="10.9" y="1" width="1" height="1" fill="#999"/><rect x="10.9" y="6" width="1" height="1" fill="#999"/></svg>
<div class="abs t" style="left:1510px;top:783.8px;font-size:12px;line-height:14.4px;color:#cfcfcf;">位置:</div>
<div class="abs" style="left:1510px;top:801.6px;width:174px;height:58.400000000000006px;background:#2f2f2f;border-radius:4px"></div>
<div class="abs" style="left:1510px;top:801.9px;width:174px;height:18.4px;background:#4e4e4e;border-radius:4px 4px 0 0"></div>
<div class="abs t" style="left:1523px;top:803.9px;font-size:12px;line-height:14.4px;color:#e8e8e8;">X</div>
<div class="abs t" style="right:824px;top:803.9px;font-size:12px;line-height:14.4px;color:#e8e8e8;text-align:right;">0 m</div>
<svg class="abs" style="left:1706px;top:803.6px;" width="16" height="15" viewBox="0 0 16 15"><path d="M2.5,6 V4.5 A3.2,3.2 0 0 1 8.9,4.5" fill="none" stroke="#b0b0b0" stroke-width="1.2"/><rect x="5.5" y="7" width="9" height="6.5" fill="none" stroke="#b0b0b0" stroke-width="1.2"/><rect x="9.2" y="9.6" width="1.6" height="1.6" fill="#b0b0b0"/></svg>
<div class="abs" style="left:1510px;top:821.4px;width:174px;height:18.4px;background:#4e4e4e;"></div>
<div class="abs t" style="left:1523px;top:823.4px;font-size:12px;line-height:14.4px;color:#e8e8e8;">Y</div>
<div class="abs t" style="right:824px;top:823.4px;font-size:12px;line-height:14.4px;color:#e8e8e8;text-align:right;">0 m</div>
<svg class="abs" style="left:1706px;top:823.1px;" width="16" height="15" viewBox="0 0 16 15"><path d="M2.5,6 V4.5 A3.2,3.2 0 0 1 8.9,4.5" fill="none" stroke="#b0b0b0" stroke-width="1.2"/><rect x="5.5" y="7" width="9" height="6.5" fill="none" stroke="#b0b0b0" stroke-width="1.2"/><rect x="9.2" y="9.6" width="1.6" height="1.6" fill="#b0b0b0"/></svg>
<div class="abs" style="left:1510px;top:841.3px;width:174px;height:18.4px;background:#4e4e4e;border-radius:0 0 4px 4px"></div>
<div class="abs t" style="left:1523px;top:843.3px;font-size:12px;line-height:14.4px;color:#e8e8e8;">Z</div>
<div class="abs t" style="right:824px;top:843.3px;font-size:12px;line-height:14.4px;color:#e8e8e8;text-align:right;">0 m</div>
<svg class="abs" style="left:1706px;top:843.0px;" width="16" height="15" viewBox="0 0 16 15"><path d="M2.5,6 V4.5 A3.2,3.2 0 0 1 8.9,4.5" fill="none" stroke="#b0b0b0" stroke-width="1.2"/><rect x="5.5" y="7" width="9" height="6.5" fill="none" stroke="#b0b0b0" stroke-width="1.2"/><rect x="9.2" y="9.6" width="1.6" height="1.6" fill="#b0b0b0"/></svg>
<div class="abs t" style="left:1510px;top:865.8px;font-size:12px;line-height:14.4px;color:#cfcfcf;">旋转:</div>
<div class="abs" style="left:1510px;top:883.5px;width:174px;height:58.599999999999994px;background:#2f2f2f;border-radius:4px"></div>
<div class="abs" style="left:1510px;top:883.8px;width:174px;height:18.4px;background:#4e4e4e;border-radius:4px 4px 0 0"></div>
<div class="abs t" style="left:1523px;top:885.8px;font-size:12px;line-height:14.4px;color:#e8e8e8;">X</div>
<div class="abs t" style="right:824px;top:885.8px;font-size:12px;line-height:14.4px;color:#e8e8e8;text-align:right;">0°</div>
<svg class="abs" style="left:1706px;top:885.5px;" width="16" height="15" viewBox="0 0 16 15"><path d="M2.5,6 V4.5 A3.2,3.2 0 0 1 8.9,4.5" fill="none" stroke="#b0b0b0" stroke-width="1.2"/><rect x="5.5" y="7" width="9" height="6.5" fill="none" stroke="#b0b0b0" stroke-width="1.2"/><rect x="9.2" y="9.6" width="1.6" height="1.6" fill="#b0b0b0"/></svg>
<div class="abs" style="left:1510px;top:903.4px;width:174px;height:18.4px;background:#4e4e4e;"></div>
<div class="abs t" style="left:1523px;top:905.4px;font-size:12px;line-height:14.4px;color:#e8e8e8;">Y</div>
<div class="abs t" style="right:824px;top:905.4px;font-size:12px;line-height:14.4px;color:#e8e8e8;text-align:right;">0°</div>
<svg class="abs" style="left:1706px;top:905.1px;" width="16" height="15" viewBox="0 0 16 15"><path d="M2.5,6 V4.5 A3.2,3.2 0 0 1 8.9,4.5" fill="none" stroke="#b0b0b0" stroke-width="1.2"/><rect x="5.5" y="7" width="9" height="6.5" fill="none" stroke="#b0b0b0" stroke-width="1.2"/><rect x="9.2" y="9.6" width="1.6" height="1.6" fill="#b0b0b0"/></svg>
<div class="abs" style="left:1510px;top:923.4px;width:174px;height:18.4px;background:#4e4e4e;border-radius:0 0 4px 4px"></div>
<div class="abs t" style="left:1523px;top:925.4px;font-size:12px;line-height:14.4px;color:#e8e8e8;">Z</div>
<div class="abs t" style="right:824px;top:925.4px;font-size:12px;line-height:14.4px;color:#e8e8e8;text-align:right;">0°</div>
<svg class="abs" style="left:1706px;top:925.1px;" width="16" height="15" viewBox="0 0 16 15"><path d="M2.5,6 V4.5 A3.2,3.2 0 0 1 8.9,4.5" fill="none" stroke="#b0b0b0" stroke-width="1.2"/><rect x="5.5" y="7" width="9" height="6.5" fill="none" stroke="#b0b0b0" stroke-width="1.2"/><rect x="9.2" y="9.6" width="1.6" height="1.6" fill="#b0b0b0"/></svg>
<div class="abs" style="left:1510px;top:946px;width:226px;height:18px;background:#282828;border-radius:4px"></div>
<div class="abs t" style="left:1518px;top:947.8px;font-size:12px;line-height:14.4px;color:#c8c8c8;">XYZ 欧拉</div>
<svg class="abs" style="left:1725.5px;top:951.25px;" width="9.0" height="7.5" viewBox="0 0 9.0 7.5"><path d="M1,2 L4.5,5.5 L8.0,2" fill="none" stroke="#ddd" stroke-width="1.3"/></svg>
<div class="abs" style="left:1493px;top:967px;width:248px;height:86px;background:#9a6419;border:1px solid #fff"></div>
<div class="abs t" style="left:1510px;top:969.8px;font-size:12px;line-height:14.4px;color:#e9b673;">缩放:</div>
<div class="abs" style="left:1510px;top:987.1px;width:174px;height:57.89999999999998px;background:#94601a;border-radius:4px"></div>
<div class="abs" style="left:1510px;top:987.4000000000001px;width:174px;height:18.4px;background:#a5702b;border-radius:4px 4px 0 0"></div>
<div class="abs t" style="left:1523px;top:989.4px;font-size:12px;line-height:14.4px;color:#f3c88e;">X</div>
<div class="abs t" style="right:824px;top:989.4px;font-size:12px;line-height:14.4px;color:#f3c88e;text-align:right;">1.000</div>
<svg class="abs" style="left:1706px;top:989.1px;" width="16" height="15" viewBox="0 0 16 15"><path d="M2.5,6 V4.5 A3.2,3.2 0 0 1 8.9,4.5" fill="none" stroke="#e8b26c" stroke-width="1.2"/><rect x="5.5" y="7" width="9" height="6.5" fill="none" stroke="#e8b26c" stroke-width="1.2"/><rect x="9.2" y="9.6" width="1.6" height="1.6" fill="#e8b26c"/></svg>
<div class="abs" style="left:1510px;top:1006.8px;width:174px;height:18.4px;background:#a5702b;"></div>
<div class="abs t" style="left:1523px;top:1008.8px;font-size:12px;line-height:14.4px;color:#f3c88e;">Y</div>
<div class="abs t" style="right:824px;top:1008.8px;font-size:12px;line-height:14.4px;color:#f3c88e;text-align:right;">1.000</div>
<svg class="abs" style="left:1706px;top:1008.5px;" width="16" height="15" viewBox="0 0 16 15"><path d="M2.5,6 V4.5 A3.2,3.2 0 0 1 8.9,4.5" fill="none" stroke="#e8b26c" stroke-width="1.2"/><rect x="5.5" y="7" width="9" height="6.5" fill="none" stroke="#e8b26c" stroke-width="1.2"/><rect x="9.2" y="9.6" width="1.6" height="1.6" fill="#e8b26c"/></svg>
<div class="abs" style="left:1510px;top:1026.3px;width:174px;height:18.4px;background:#a5702b;border-radius:0 0 4px 4px"></div>
<div class="abs t" style="left:1523px;top:1028.3px;font-size:12px;line-height:14.4px;color:#f3c88e;">Z</div>
<div class="abs t" style="right:824px;top:1028.3px;font-size:12px;line-height:14.4px;color:#f3c88e;text-align:right;">1.000</div>
<svg class="abs" style="left:1706px;top:1028.0px;" width="16" height="15" viewBox="0 0 16 15"><path d="M2.5,6 V4.5 A3.2,3.2 0 0 1 8.9,4.5" fill="none" stroke="#e8b26c" stroke-width="1.2"/><rect x="5.5" y="7" width="9" height="6.5" fill="none" stroke="#e8b26c" stroke-width="1.2"/><rect x="9.2" y="9.6" width="1.6" height="1.6" fill="#e8b26c"/></svg>
<div class="abs t" style="left:1510px;top:1051.8px;font-size:12px;line-height:14.4px;color:#cfcfcf;">尺寸:</div>
<div class="abs" style="left:1510px;top:1069.0px;width:226px;height:58.10000000000002px;background:#2f2f2f;border-radius:4px"></div>
<div class="abs" style="left:1510px;top:1069.3px;width:226px;height:18.4px;background:#4e4e4e;border-radius:4px 4px 0 0"></div>
<div class="abs t" style="left:1523px;top:1071.3px;font-size:12px;line-height:14.4px;color:#e8e8e8;">X</div>
<div class="abs t" style="right:772px;top:1071.3px;font-size:12px;line-height:14.4px;color:#e8e8e8;text-align:right;">36 m</div>
<div class="abs" style="left:1510px;top:1088.8px;width:226px;height:18.4px;background:#4e4e4e;"></div>
<div class="abs t" style="left:1523px;top:1090.8px;font-size:12px;line-height:14.4px;color:#e8e8e8;">Y</div>
<div class="abs t" style="right:772px;top:1090.8px;font-size:12px;line-height:14.4px;color:#e8e8e8;text-align:right;">16.5 m</div>
<div class="abs" style="left:1510px;top:1108.4px;width:226px;height:18.4px;background:#4e4e4e;border-radius:0 0 4px 4px"></div>
<div class="abs t" style="left:1523px;top:1110.4px;font-size:12px;line-height:14.4px;color:#e8e8e8;">Z</div>
<div class="abs t" style="right:772px;top:1110.4px;font-size:12px;line-height:14.4px;color:#e8e8e8;text-align:right;">5.8 m</div>
<div class="abs t" style="left:1493px;top:949.0px;font-size:15px;line-height:18.0px;color:#fff;font-weight:bold;text-shadow:0 0 2px #000,1px 1px 1px #000,-1px -1px 1px #000;letter-spacing:-0.2px">JimmyWong.cn</div>
<svg class="abs" style="left:0;top:0" width="1771" height="1262"><circle cx="1472" cy="796" r="7" fill="#5a2a30" stroke="#b03040" stroke-width="1.3"/><circle cx="1430" cy="796" r="7" fill="none" stroke="#5f9a20" stroke-width="1.3"/><line x1="1441.5" y1="796" x2="1441.5" y2="763.5" stroke="#3a78d8" stroke-width="2"/><line x1="1441.5" y1="796" x2="1411.5" y2="796" stroke="#e8384f" stroke-width="2"/><line x1="1441.5" y1="796" x2="1453" y2="796" stroke="#7ac822" stroke-width="2"/><circle cx="1441.5" cy="828" r="7.3" fill="#2d4466" stroke="#3a78d8" stroke-width="1.4"/><circle cx="1441.5" cy="763.5" r="8" fill="#2f78dd"/><text x="1441.5" y="767.5" font-family="Liberation Sans" font-size="11" font-weight="bold" text-anchor="middle" fill="#1a1a1a">Z</text><circle cx="1411.5" cy="796" r="8" fill="#e8384f"/><text x="1411.5" y="800" font-family="Liberation Sans" font-size="11" font-weight="bold" text-anchor="middle" fill="#1a1a1a">X</text><circle cx="1453" cy="796" r="8" fill="#78c81e"/><text x="1453" y="800" font-family="Liberation Sans" font-size="11" font-weight="bold" text-anchor="middle" fill="#1a1a1a">Y</text></svg>
<div class="abs" style="left:1455.5px;top:836px;width:28px;height:28px;background:rgba(40,40,40,0.85);border-radius:50%"></div>
<div class="abs" style="left:1455.5px;top:866px;width:28px;height:28px;background:rgba(40,40,40,0.85);border-radius:50%"></div>
<div class="abs" style="left:1455.5px;top:896px;width:28px;height:28px;background:rgba(40,40,40,0.85);border-radius:50%"></div>
<div class="abs" style="left:1455.5px;top:926px;width:28px;height:28px;background:rgba(40,40,40,0.85);border-radius:50%"></div>
<svg class="abs" style="left:0;top:0" width="1771" height="1262"><circle cx="1470.5" cy="849" r="5.5" fill="#d8d8d8"/><path d="M1470.5,846 v6 M1467.5,849 h6" stroke="#222" stroke-width="1.2"/><path d="M1466.5,853 l-5,5" stroke="#d8d8d8" stroke-width="2.2"/><path d="M1463.5,879 C1463.5,886 1466.5,888 1470.5,888 C1474.5,888 1476.5,884 1476.5,878 V874 M1466.5,880 V872 M1469.5,879 V871 M1472.5,879 V872 M1475.5,880 V874" fill="#d8d8d8" stroke="#d8d8d8" stroke-width="2.4" stroke-linecap="round"/><circle cx="1465.5" cy="906" r="3.3" fill="none" stroke="#d8d8d8" stroke-width="1.1"/><circle cx="1472.5" cy="905" r="3.6" fill="none" stroke="#d8d8d8" stroke-width="1.1"/><rect x="1464.5" y="911" width="8" height="6" fill="none" stroke="#d8d8d8" stroke-width="1.1"/><path d="M1473.5,914 l4,-3 v6z" fill="none" stroke="#d8d8d8" stroke-width="1"/><path d="M1464.5,934 h10 l3,12 h-16z M1463.5,938 h12 M1462.5,942 h14 M1467.5,934 l-1,12 M1471.5,934 l1,12" fill="none" stroke="#d8d8d8" stroke-width="1.1"/></svg>
<div class="abs" style="left:1710px;top:722px;width:59px;height:24px;background:#303030;border-radius:0 0 0 6px"></div>
<div class="abs" style="left:1718px;top:724px;width:46px;height:18px;background:#262626;border-radius:4px;border:1px solid #383838"></div>
<div class="abs t" style="left:1726px;top:725.8px;font-size:12px;line-height:14.4px;color:#e0e0e0;">选项</div>
<svg class="abs" style="left:1752.5px;top:729.25px;" width="9.0" height="7.5" viewBox="0 0 9.0 7.5"><path d="M1,2 L4.5,5.5 L8.0,2" fill="none" stroke="#ddd" stroke-width="1.3"/></svg>
<div class="abs" style="left:1776px;top:3px;width:700px;height:554.5px;background:#242424;border-radius:6px;border-top:1px solid #303030"></div>
<div class="abs" style="left:1785.5px;top:5px;width:31px;height:18.5px;background:#262626;border-radius:4px;border:1px solid #353535"></div>
<svg class="abs" style="left:1789px;top:7px;" width="20" height="15" viewBox="0 0 20 15"><rect x="1" y="1" width="5" height="3" fill="#ddd"/><path d="M3,4 V12 H6 M3,8 H6" fill="none" stroke="#ddd" stroke-width="1"/><rect x="7" y="6.5" width="7" height="3" fill="#ddd"/><rect x="7" y="10.5" width="7" height="3" fill="#ddd"/></svg>
<svg class="abs" style="left:1805.5px;top:10.25px;" width="9.0" height="7.5" viewBox="0 0 9.0 7.5"><path d="M1,2 L4.5,5.5 L8.0,2" fill="none" stroke="#ddd" stroke-width="1.3"/></svg>
<div class="abs" style="left:1822.6px;top:5px;width:31px;height:18.5px;background:#262626;border-radius:4px;border:1px solid #353535"></div>
<svg class="abs" style="left:1826px;top:6px;" width="16" height="16" viewBox="0 0 16 16"><path d="M2,6 V14 H10 M4,4 V12 H12" fill="none" stroke="#ddd" stroke-width="1"/><rect x="6" y="2" width="8" height="8" fill="none" stroke="#ddd" stroke-width="1.2"/><path d="M7,9 L9.5,5 L12,9z" fill="#ddd"/></svg>
<svg class="abs" style="left:1842.5px;top:10.25px;" width="9.0" height="7.5" viewBox="0 0 9.0 7.5"><path d="M1,2 L4.5,5.5 L8.0,2" fill="none" stroke="#ddd" stroke-width="1.3"/></svg>
<div class="abs" style="left:2057px;top:5px;width:117px;height:18.5px;background:#1d1d1d;border-radius:4px;border:1px solid #303030"></div>
<svg class="abs" style="left:2060px;top:7px;" width="14" height="14" viewBox="0 0 14 14"><circle cx="8.5" cy="5.5" r="4" fill="none" stroke="#ccc" stroke-width="1.2"/><path d="M5.5,8.5 L1,13" stroke="#ccc" stroke-width="1.3"/></svg>
<div class="abs t" style="left:2081px;top:6.8px;font-size:12px;line-height:14.4px;color:#7a7a7a;">搜索</div>
<div class="abs" style="left:2407px;top:5px;width:31px;height:18.5px;background:#262626;border-radius:4px;border:1px solid #353535"></div>
<svg class="abs" style="left:2412px;top:7px;" width="14" height="15" viewBox="0 0 14 15"><path d="M1,1 H13 L8,7 V14 L6,12 V7Z" fill="none" stroke="#e0e0e0" stroke-width="1.2"/></svg>
<svg class="abs" style="left:2427.5px;top:10.25px;" width="9.0" height="7.5" viewBox="0 0 9.0 7.5"><path d="M1,2 L4.5,5.5 L8.0,2" fill="none" stroke="#ddd" stroke-width="1.3"/></svg>
<div class="abs" style="left:2449px;top:5px;width:19px;height:18.5px;background:#3d3d3d;border-radius:4px"></div>
<svg class="abs" style="left:2450px;top:6px;" width="17" height="17" viewBox="0 0 17 17"><rect x="2" y="4" width="9" height="2" fill="none" stroke="#ccc" stroke-width="1"/><rect x="3" y="7" width="7" height="7" fill="none" stroke="#ccc" stroke-width="1"/><circle cx="12.5" cy="4.5" r="3.5" fill="#fff"/><path d="M12.5,2.5 v4 M10.5,4.5 h4" stroke="#333" stroke-width="1"/></svg>
<div class="abs" style="left:1777px;top:49.5px;width:698px;height:20px;background:#252525;"></div>
<div class="abs" style="left:1777px;top:89.7px;width:698px;height:20px;background:#252525;"></div>
<div class="abs" style="left:1777px;top:129.6px;width:698px;height:20px;background:#252525;"></div>
<div class="abs" style="left:1777px;top:169.4px;width:698px;height:20px;background:#252525;"></div>
<div class="abs" style="left:1777px;top:209.4px;width:698px;height:20px;background:#252525;"></div>
<div class="abs" style="left:1777px;top:249.39999999999998px;width:698px;height:20px;background:#252525;"></div>
<div class="abs" style="left:1777px;top:289.4px;width:698px;height:20px;background:#252525;"></div>
<div class="abs" style="left:1777px;top:329.4px;width:698px;height:20px;background:#252525;"></div>
<div class="abs" style="left:1777px;top:369.4px;width:698px;height:20px;background:#252525;"></div>
<div class="abs" style="left:1777px;top:409.4px;width:698px;height:20px;background:#252525;"></div>
<div class="abs" style="left:1777px;top:449.4px;width:698px;height:20px;background:#252525;"></div>
<div class="abs" style="left:1777px;top:489.4px;width:698px;height:20px;background:#252525;"></div>
<div class="abs" style="left:1777px;top:529.4px;width:698px;height:20px;background:#252525;"></div>
<svg class="abs" style="left:1800px;top:32px;" width="14" height="14" viewBox="0 0 14 14"><rect x="0.5" y="1" width="13" height="3" fill="#e0e0e0"/><rect x="1.5" y="5" width="11" height="8" fill="#e0e0e0"/><rect x="5" y="7" width="4" height="1.6" fill="#333"/></svg>
<div class="abs t" style="left:1821px;top:31.4px;font-size:12px;line-height:14.4px;color:#d0d0d0;">场景集合</div>
<svg class="abs" style="left:1802.5px;top:56.25px;" width="9.0" height="7.5" viewBox="0 0 9.0 7.5"><path d="M1,2 L4.5,5.5 L8.0,2" fill="none" stroke="#ccc" stroke-width="1.3"/></svg>
<svg class="abs" style="left:1820px;top:53px;" width="14" height="14" viewBox="0 0 14 14"><rect x="0.5" y="1" width="13" height="3" fill="#e0e0e0"/><rect x="1.5" y="5" width="11" height="8" fill="#e0e0e0"/><rect x="5" y="7" width="4" height="1.6" fill="#333"/></svg>
<div class="abs t" style="left:1841px;top:52.8px;font-size:12px;line-height:14.4px;color:#d4d4d4;">Collection</div>
<div class="abs" style="left:1806px;top:75px;width:1px;height:10px;background:#555;"></div>
<svg class="abs" style="left:1823.25px;top:75.0px;" width="7.5" height="9.0" viewBox="0 0 7.5 9.0"><path d="M2,1 L5.5,4.5 L2,8.0" fill="none" stroke="#999" stroke-width="1.3"/></svg>
<svg class="abs" style="left:1839px;top:72px;" width="16" height="15" viewBox="0 0 16 15"><circle cx="4" cy="4" r="3" fill="#9a6a44"/><circle cx="11" cy="3.5" r="3.2" fill="#9a6a44"/><rect x="2" y="8" width="9" height="6" fill="#9a6a44"/><path d="M11,11 l4,-3 v6z" fill="#9a6a44"/></svg>
<div class="abs t" style="left:1861px;top:72.3px;font-size:12px;line-height:14.4px;color:#8a8a8a;">Camera.001</div>
<svg class="abs" style="left:1946px;top:71px;" width="16" height="16" viewBox="0 0 16 16"><circle cx="4" cy="5" r="3" fill="none" stroke="#2e9e7a" stroke-width="1.2"/><path d="M1,5 C1,1 8,1 9,3 C11,0 15,1 15,4 C15,7 12,8 10,7" fill="none" stroke="#2e9e7a" stroke-width="1.2"/><rect x="3" y="9" width="8" height="5" fill="none" stroke="#2e9e7a" stroke-width="1.2"/><path d="M11,11.5 l4,-2.5 v5z" fill="none" stroke="#2e9e7a" stroke-width="1.1"/></svg>
<svg class="abs" style="left:1802.5px;top:96.25px;" width="9.0" height="7.5" viewBox="0 0 9.0 7.5"><path d="M1,2 L4.5,5.5 L8.0,2" fill="none" stroke="#ccc" stroke-width="1.3"/></svg>
<div class="abs" style="left:1817px;top:91px;width:19px;height:17.5px;background:#3a3a3a;border-radius:4px;border:1px solid #555"></div>
<svg class="abs" style="left:1820px;top:93px;" width="14" height="14" viewBox="0 0 14 14"><rect x="0.5" y="1" width="13" height="3" fill="#e0e0e0"/><rect x="1.5" y="5" width="11" height="8" fill="#e0e0e0"/><rect x="5" y="7" width="4" height="1.6" fill="#333"/></svg>
<div class="abs t" style="left:1841px;top:92.5px;font-size:12px;line-height:14.4px;color:#f0f0f0;">A37</div>
<div class="abs" style="left:1806px;top:114px;width:1px;height:50px;background:#555;"></div>
<svg class="abs" style="left:1823.25px;top:115.5px;" width="7.5" height="9.0" viewBox="0 0 7.5 9.0"><path d="M2,1 L5.5,4.5 L2,8.0" fill="none" stroke="#999" stroke-width="1.3"/></svg>
<svg class="abs" style="left:1839px;top:112px;" width="16" height="16" viewBox="0 0 16 16"><path d="M7,2 V9 L2,13 M7,9 H14" fill="none" stroke="#9a6a44" stroke-width="2.2" stroke-linecap="round"/></svg>
<div class="abs t" style="left:1861px;top:112.8px;font-size:12px;line-height:14.4px;color:#8a8a8a;">Empty</div>
<div class="abs" style="left:1915.6px;top:111.5px;width:19px;height:17.5px;background:#3a3a3a;border-radius:4px;border:1px solid #4a4a4a"></div>
<svg class="abs" style="left:1917px;top:113px;" width="16" height="16" viewBox="0 0 16 16"><path d="M2,2 H14 L8,14Z M5.5,4.5 H10.5 L8,9.5Z" fill="#9a6a44" fill-rule="evenodd"/></svg>
<div class="abs t" style="left:1930px;top:119.6px;font-size:9px;line-height:10.8px;color:#eee;">5</div>
<svg class="abs" style="left:1823.25px;top:135.1px;" width="7.5" height="9.0" viewBox="0 0 7.5 9.0"><path d="M2,1 L5.5,4.5 L2,8.0" fill="none" stroke="#999" stroke-width="1.3"/></svg>
<svg class="abs" style="left:1839px;top:132px;" width="16" height="16" viewBox="0 0 16 16"><path d="M2,2 H14 L8,14Z M5.5,4.5 H10.5 L8,9.5Z" fill="#9a6a44" fill-rule="evenodd"/></svg>
<div class="abs t" style="left:1861px;top:132.4px;font-size:12px;line-height:14.4px;color:#8a8a8a;">Plane.004</div>
<svg class="abs" style="left:1937px;top:132px;" width="15" height="15" viewBox="0 0 15 15"><path d="M2.5,2.5 H12.5 L7.5,12.5Z" fill="none" stroke="#2e9e7a" stroke-width="1.1"/><rect x="0.5" y="0.5" width="4" height="4" fill="#242424" stroke="#2e9e7a" stroke-width="1"/><rect x="10.5" y="0.5" width="4" height="4" fill="#242424" stroke="#2e9e7a" stroke-width="1"/><rect x="5.5" y="10.5" width="4" height="4" fill="#242424" stroke="#2e9e7a" stroke-width="1"/></svg>
<svg class="abs" style="left:1839px;top:152px;" width="16" height="16" viewBox="0 0 16 16"><path d="M7,2 V9 L2,13 M7,9 H14" fill="none" stroke="#9a6a44" stroke-width="2.2" stroke-linecap="round"/></svg>
<div class="abs t" style="left:1861px;top:152.2px;font-size:12px;line-height:14.4px;color:#8a8a8a;">楼幢.002</div>
<svg class="abs" style="left:2411px;top:54.5px;" width="11" height="11" viewBox="0 0 11 11"><rect x="0" y="0" width="10.5" height="10.5" rx="1" fill="#e6e6e6"/><path d="M2,5.5 L4.3,8 L8.5,2.5" fill="none" stroke="#222" stroke-width="1.6"/></svg>
<svg class="abs" style="left:2430px;top:54.0px;" width="15" height="11" viewBox="0 0 15 11"><path d="M1,5.5 C4,0.5 11,0.5 14,5.5 C11,10.5 4,10.5 1,5.5Z" fill="none" stroke="#eee" stroke-width="1.4"/><circle cx="7.5" cy="5.5" r="1.6" fill="#eee"/></svg>
<svg class="abs" style="left:2451px;top:53.5px;" width="14" height="12" viewBox="0 0 14 12"><path d="M0.5,3 H4 L5,1 H9 L10,3 H13.5 V11.5 H0.5Z" fill="#e8e8e8"/><circle cx="7" cy="7" r="2.6" fill="none" stroke="#333" stroke-width="1.1"/></svg>
<svg class="abs" style="left:2430px;top:77.5px;" width="15" height="8" viewBox="0 0 15 8"><path d="M1,2 C4,7 11,7 14,2" fill="none" stroke="#aaa" stroke-width="1"/></svg>
<svg class="abs" style="left:2451px;top:73.5px;" width="14" height="12" viewBox="0 0 14 12"><path d="M0.5,3 H4 L5,1 H9 L10,3 H13.5 V11.5 H0.5Z" fill="#e8e8e8"/><circle cx="7" cy="7" r="2.6" fill="none" stroke="#333" stroke-width="1.1"/></svg>
<svg class="abs" style="left:2411px;top:94.7px;" width="11" height="11" viewBox="0 0 11 11"><rect x="0" y="0" width="10.5" height="10.5" rx="1" fill="#e6e6e6"/><path d="M2,5.5 L4.3,8 L8.5,2.5" fill="none" stroke="#222" stroke-width="1.6"/></svg>
<svg class="abs" style="left:2430px;top:94.2px;" width="15" height="11" viewBox="0 0 15 11"><path d="M1,5.5 C4,0.5 11,0.5 14,5.5 C11,10.5 4,10.5 1,5.5Z" fill="none" stroke="#eee" stroke-width="1.4"/><circle cx="7.5" cy="5.5" r="1.6" fill="#eee"/></svg>
<svg class="abs" style="left:2451px;top:93.7px;" width="14" height="12" viewBox="0 0 14 12"><path d="M0.5,3 H4 L5,1 H9 L10,3 H13.5 V11.5 H0.5Z" fill="#e8e8e8"/><circle cx="7" cy="7" r="2.6" fill="none" stroke="#333" stroke-width="1.1"/></svg>
<svg class="abs" style="left:2430px;top:118px;" width="15" height="8" viewBox="0 0 15 8"><path d="M1,2 C4,7 11,7 14,2" fill="none" stroke="#aaa" stroke-width="1"/></svg>
<svg class="abs" style="left:2451px;top:114px;" width="14" height="12" viewBox="0 0 14 12"><path d="M0.5,3 H4 L5,1 H9 L10,3 H13.5 V11.5 H0.5Z" fill="#e8e8e8"/><circle cx="7" cy="7" r="2.6" fill="none" stroke="#333" stroke-width="1.1"/></svg>
<svg class="abs" style="left:2430px;top:137.6px;" width="15" height="8" viewBox="0 0 15 8"><path d="M1,2 C4,7 11,7 14,2" fill="none" stroke="#aaa" stroke-width="1"/></svg>
<svg class="abs" style="left:2451px;top:133.6px;" width="14" height="12" viewBox="0 0 14 12"><path d="M0.5,3 H4 L5,1 H9 L10,3 H13.5 V11.5 H0.5Z" fill="#e8e8e8"/><circle cx="7" cy="7" r="2.6" fill="none" stroke="#333" stroke-width="1.1"/></svg>
<svg class="abs" style="left:2430px;top:157.4px;" width="15" height="8" viewBox="0 0 15 8"><path d="M1,2 C4,7 11,7 14,2" fill="none" stroke="#aaa" stroke-width="1"/></svg>
<svg class="abs" style="left:2451px;top:153.4px;" width="14" height="12" viewBox="0 0 14 12"><path d="M0.5,3 H4 L5,1 H9 L10,3 H13.5 V11.5 H0.5Z" fill="#e8e8e8"/><circle cx="7" cy="7" r="2.6" fill="none" stroke="#333" stroke-width="1.1"/></svg>
<div class="abs" style="left:1752px;top:692px;width:24px;height:406px;background:#161616;"></div>
<div class="abs" style="left:1770.5px;top:692px;width:2px;height:406px;background:#262626;"></div>
<div class="abs" style="left:1752px;top:1098px;width:743px;height:164px;background:#2a2a2a;"></div>
<div class="abs" style="left:2477px;top:0px;width:18px;height:1098px;background:#2a2a2a;"></div>
<div class="abs" style="left:2476px;top:0px;width:1.2px;height:1099px;background:#575757;"></div>
<div class="abs" style="left:1776px;top:562px;width:700px;height:536px;background:#2b2b2b;border-radius:6px 6px 0 0"></div>
<div class="abs" style="left:1776px;top:590px;width:29px;height:508px;background:#1d1d1d;"></div>
<div class="abs" style="left:1785px;top:565px;width:31px;height:19px;background:#262626;border-radius:4px;border:1px solid #353535"></div>
<svg class="abs" style="left:1789px;top:566px;" width="16" height="17" viewBox="0 0 16 17"><rect x="1" y="2" width="14" height="5.5" rx="2.7" fill="#e0e0e0"/><rect x="8" y="3.2" width="5.8" height="3" rx="1.5" fill="#1d1d1d"/><rect x="1" y="9.5" width="14" height="5.5" rx="2.7" fill="#e0e0e0"/><rect x="8" y="10.7" width="5.8" height="3" rx="1.5" fill="#1d1d1d"/></svg>
<svg class="abs" style="left:1805.5px;top:570.25px;" width="9.0" height="7.5" viewBox="0 0 9.0 7.5"><path d="M1,2 L4.5,5.5 L8.0,2" fill="none" stroke="#ddd" stroke-width="1.3"/></svg>
<div class="abs" style="left:2068px;top:563px;width:117px;height:18.5px;background:#1d1d1d;border-radius:4px;border:1px solid #303030"></div>
<svg class="abs" style="left:2072px;top:565px;" width="14" height="14" viewBox="0 0 14 14"><circle cx="8.5" cy="5.5" r="4" fill="none" stroke="#ccc" stroke-width="1.2"/><path d="M5.5,8.5 L1,13" stroke="#ccc" stroke-width="1.3"/></svg>
<div class="abs t" style="left:2092px;top:564.8px;font-size:12px;line-height:14.4px;color:#7a7a7a;">搜索</div>
<div class="abs" style="left:2449px;top:563px;width:19px;height:18px;background:#262626;border-radius:4px;border:1px solid #353535"></div>
<svg class="abs" style="left:2454.0px;top:568.25px;" width="9.0" height="7.5" viewBox="0 0 9.0 7.5"><path d="M1,2 L4.5,5.5 L8.0,2" fill="none" stroke="#ddd" stroke-width="1.3"/></svg>
<div class="abs" style="left:1779px;top:844px;width:26px;height:26px;background:#303030;border-radius:4px 0 0 4px"></div>
<svg class="abs" style="left:1784px;top:599.5px;" width="15" height="15" viewBox="0 0 15 15"><path d="M4,2 V8" stroke="#c8c8c8" stroke-width="1.4"/><circle cx="4" cy="11" r="2.6" fill="#c8c8c8"/><path d="M10,14 V7 M7.5,2 V5 A2.5,2.5 0 0 0 12.5,5 V2" fill="none" stroke="#c8c8c8" stroke-width="1.6"/></svg>
<svg class="abs" style="left:1784px;top:636.5px;" width="15" height="15" viewBox="0 0 15 15"><rect x="1.5" y="5" width="12" height="8.5" rx="1" fill="none" stroke="#c8c8c8" stroke-width="1.4"/><path d="M4,5 V3 H9 V5" fill="none" stroke="#c8c8c8" stroke-width="1.2"/><path d="M4,8 H9 M4,10.5 H9" stroke="#c8c8c8" stroke-width="1.1"/><rect x="10.5" y="7" width="1.5" height="1.5" fill="#c8c8c8"/><rect x="10.5" y="10" width="1.5" height="1.5" fill="#c8c8c8"/></svg>
<svg class="abs" style="left:1784px;top:664.5px;" width="15" height="15" viewBox="0 0 15 15"><rect x="1.5" y="2" width="12" height="4" rx="1" fill="#c8c8c8"/><rect x="3.5" y="6" width="8" height="7" fill="none" stroke="#c8c8c8" stroke-width="1.3"/><path d="M4.5,12.5 L7.5,8.5 L10.5,12.5Z" fill="#c8c8c8"/></svg>
<svg class="abs" style="left:1784px;top:692.5px;" width="15" height="15" viewBox="0 0 15 15"><path d="M2,5 V14 H11 M4,3 V12 H13" fill="none" stroke="#c8c8c8" stroke-width="1"/><rect x="6" y="1.5" width="8" height="8" fill="none" stroke="#c8c8c8" stroke-width="1.2"/><path d="M7,9 L9.5,5 L12,9Z" fill="#c8c8c8"/></svg>
<svg class="abs" style="left:1784px;top:720.5px;" width="15" height="15" viewBox="0 0 15 15"><path d="M1.5,12 L5,2 L8.5,12Z" fill="#c8c8c8"/><circle cx="10" cy="10" r="3.5" fill="#1d1d1d" stroke="#c8c8c8" stroke-width="1.2"/><circle cx="12.5" cy="3.5" r="1.8" fill="#c8c8c8"/></svg>
<svg class="abs" style="left:1784px;top:748.5px;" width="15" height="15" viewBox="0 0 15 15"><circle cx="7.5" cy="7.5" r="5.5" fill="none" stroke="#c05060" stroke-width="1.5"/><path d="M4,5 C6,4 7,6 6,8 C5,10 8,11 9,9 C10,7 12,8 12,9" fill="none" stroke="#c05060" stroke-width="1.6"/><path d="M1,13 L14,2" stroke="#c05060" stroke-width="1"/></svg>
<svg class="abs" style="left:1784px;top:784.5px;" width="15" height="15" viewBox="0 0 15 15"><rect x="1.5" y="2" width="12" height="3" fill="none" stroke="#e6e6e6" stroke-width="1.3"/><rect x="2.5" y="5" width="10" height="8" fill="none" stroke="#e6e6e6" stroke-width="1.3"/><rect x="6" y="7" width="3" height="1.5" fill="#e6e6e6"/></svg>
<svg class="abs" style="left:1784px;top:820.5px;" width="15" height="15" viewBox="0 0 15 15"><path d="M1,4 V1 H4 M11,1 H14 V4 M14,11 V14 H11 M4,14 H1 V11" fill="none" stroke="#c07838" stroke-width="1.1"/><rect x="3.5" y="3.5" width="8" height="8" fill="#d0823c"/></svg>
<svg class="abs" style="left:1784px;top:849.5px;" width="15" height="15" viewBox="0 0 15 15"><path d="M3,13 L8.5,7.5" stroke="#4a8ee8" stroke-width="3" stroke-linecap="round"/><path d="M8,7 A3.8,3.8 0 1 1 13.5,3.5 L11.2,5.8 L9.2,5.8 L9.2,3.8 L11.5,1.5 A3.8,3.8 0 0 0 8,7Z" fill="#4a8ee8"/></svg>
<svg class="abs" style="left:1784px;top:877.5px;" width="15" height="15" viewBox="0 0 15 15"><circle cx="3" cy="3" r="2" fill="#4a8ee8"/><circle cx="12.5" cy="3" r="1.5" fill="#4a8ee8"/><circle cx="3" cy="13" r="1.5" fill="#4a8ee8"/><circle cx="12" cy="12.5" r="2" fill="#4a8ee8"/><path d="M3,3 H12 M3,3 V13 M3,3 L12,12.5" stroke="#4a8ee8" stroke-width="1.2"/></svg>
<svg class="abs" style="left:1784px;top:904.5px;" width="15" height="15" viewBox="0 0 15 15"><circle cx="7.5" cy="7.5" r="5.5" fill="none" stroke="#4a8ee8" stroke-width="1.4"/><circle cx="7.5" cy="7.5" r="2.5" fill="#4a8ee8"/><circle cx="12" cy="3" r="1.8" fill="#4a8ee8"/></svg>
<svg class="abs" style="left:1784px;top:932.5px;" width="15" height="15" viewBox="0 0 15 15"><ellipse cx="7.5" cy="8" rx="6" ry="4" fill="none" stroke="#4a8ee8" stroke-width="1.4" transform="rotate(-30 7.5 8)"/><circle cx="7.5" cy="7.5" r="2.2" fill="#4a8ee8"/></svg>
<svg class="abs" style="left:1784px;top:960.5px;" width="15" height="15" viewBox="0 0 15 15"><path d="M2.5,2.5 H12.5 L7.5,12.5Z" fill="none" stroke="#26a070" stroke-width="1.4"/><circle cx="2.5" cy="2.5" r="1.6" fill="#26a070"/><circle cx="12.5" cy="2.5" r="1.6" fill="#26a070"/><circle cx="7.5" cy="12.5" r="1.6" fill="#26a070"/></svg>
<svg class="abs" style="left:1784px;top:988.5px;" width="15" height="15" viewBox="0 0 15 15"><circle cx="7.5" cy="7.5" r="6" fill="#c04050"/><path d="M7.5,1.5 A6,6 0 0 1 13.5,7.5 H7.5Z M7.5,7.5 V13.5 A6,6 0 0 1 1.5,7.5Z" fill="#f0d0d4"/></svg>
<svg class="abs" style="left:1816px;top:597px;" width="14" height="14" viewBox="0 0 14 14"><path d="M1,4 V1 H4 M10,1 H13 V4 M13,10 V13 H10 M4,13 H1 V10" fill="none" stroke="#ccc" stroke-width="1"/><rect x="3.5" y="3.5" width="7" height="7" fill="#e6e6e6"/></svg>
<div class="abs t" style="left:1838px;top:596.8px;font-size:12px;line-height:14.4px;color:#e0e0e0;">Plane.007</div>
<svg class="abs" style="left:1907.25px;top:599.5px;" width="7.5" height="9.0" viewBox="0 0 7.5 9.0"><path d="M2,1 L5.5,4.5 L2,8.0" fill="none" stroke="#ccc" stroke-width="1.3"/></svg>
<svg class="abs" style="left:1923px;top:597px;" width="15" height="15" viewBox="0 0 15 15"><path d="M1,5 H10 V14 H1Z M1,5 L5,1 H14 V10 L10,14 M10,5 L14,1" fill="none" stroke="#ddd" stroke-width="1"/></svg>
<div class="abs t" style="left:1946px;top:596.8px;font-size:12px;line-height:14.4px;color:#e0e0e0;">实体化</div>
<svg class="abs" style="left:2451px;top:597px;" width="15" height="15" viewBox="0 0 15 15"><path d="M14,5 L10,1 L7,5 L5,5 L10,10 L10,8 L14,5Z M7,8 L1,14" fill="none" stroke="#bbb" stroke-width="1"/></svg>
<div class="abs" style="left:1814px;top:631px;width:654px;height:18.5px;background:#4b4b4b;border-radius:4px"></div>
<div class="abs t" style="left:1820px;top:631.0px;font-size:15px;line-height:18.0px;color:#e0e0e0;">+</div>
<div class="abs t" style="left:2049.0px;width:200px;top:632.8px;font-size:12px;line-height:14.4px;color:#e6e6e6;text-align:center;">添加修改器</div>
<div class="abs" style="left:1813.5px;top:661.5px;width:656px;height:367px;background:#363636;border-radius:5px;border:1px solid #4772b3"></div>
<svg class="abs" style="left:1821.5px;top:669.75px;" width="9.0" height="7.5" viewBox="0 0 9.0 7.5"><path d="M1,2 L4.5,5.5 L8.0,2" fill="none" stroke="#ddd" stroke-width="1.3"/></svg>
<svg class="abs" style="left:1836px;top:666px;" width="15" height="15" viewBox="0 0 15 15"><path d="M1,5 H10 V14 H1Z M1,5 L5,1 H14 V10 L10,14 M10,5 L14,1" fill="none" stroke="#ddd" stroke-width="1"/></svg>
<div class="abs" style="left:1862px;top:665.5px;width:455px;height:17.5px;background:#1d1d1d;border-radius:4px 0 0 4px"></div>
<div class="abs t" style="left:1869px;top:666.8px;font-size:12px;line-height:14.4px;color:#e6e6e6;">实体化</div>
<div class="abs" style="left:2318px;top:665.5px;width:20px;height:17.5px;background:#4b4b4b;"></div>
<svg class="abs" style="left:2321px;top:667px;" width="14" height="14" viewBox="0 0 14 14"><path d="M2.5,2.5 H11.5 L7,11.5Z" fill="none" stroke="#eee" stroke-width="1"/><rect x="1" y="1" width="3" height="3" fill="#4b4b4b" stroke="#eee" stroke-width="0.9"/><rect x="10" y="1" width="3" height="3" fill="#4b4b4b" stroke="#eee" stroke-width="0.9"/><rect x="5.5" y="10" width="3" height="3" fill="#4b4b4b" stroke="#eee" stroke-width="0.9"/></svg>
<div class="abs" style="left:2339px;top:665.5px;width:19.5px;height:17.5px;background:#4772b3;"></div>
<div class="abs" style="left:2359.5px;top:665.5px;width:19.5px;height:17.5px;background:#4772b3;"></div>
<div class="abs" style="left:2380px;top:665.5px;width:19.5px;height:17.5px;background:#4772b3;"></div>
<svg class="abs" style="left:2341px;top:667px;" width="15" height="14" viewBox="0 0 15 14"><rect x="2" y="3" width="9" height="9" fill="none" stroke="#fff" stroke-width="1" stroke-dasharray="2 2"/><rect x="1" y="10" width="3" height="3" fill="#4772b3" stroke="#fff" stroke-width="0.9"/><rect x="10" y="1" width="4" height="4" fill="#fff"/></svg>
<svg class="abs" style="left:2362px;top:667px;" width="15" height="14" viewBox="0 0 15 14"><rect x="1.5" y="2" width="12" height="8" fill="none" stroke="#fff" stroke-width="1.2"/><path d="M7.5,10 V12.5 M4,13 H11" stroke="#fff" stroke-width="1.1"/></svg>
<svg class="abs" style="left:2382px;top:667px;" width="15" height="14" viewBox="0 0 15 14"><path d="M0.5,3 H4 L5,1 H10 L11,3 H14.5 V12.5 H0.5Z" fill="#fff"/><circle cx="7.5" cy="7.5" r="2.8" fill="#4772b3"/></svg>
<div class="abs" style="left:2400px;top:665.5px;width:18px;height:17.5px;background:#1f1f1f;border-radius:0 4px 4px 0"></div>
<svg class="abs" style="left:2404.5px;top:669.75px;" width="9.0" height="7.5" viewBox="0 0 9.0 7.5"><path d="M1,2 L4.5,5.5 L8.0,2" fill="none" stroke="#ddd" stroke-width="1.3"/></svg>
<svg class="abs" style="left:2423px;top:667px;" width="13" height="13" viewBox="0 0 13 13"><path d="M2,2 L11,11 M11,2 L2,11" stroke="#ddd" stroke-width="1.2"/></svg>
<svg class="abs" style="left:2446px;top:670px;" width="12" height="8" viewBox="0 0 12 8"><rect x="1" y="1" width="1" height="1" fill="#888"/><rect x="1" y="5" width="1" height="1" fill="#888"/><rect x="4" y="1" width="1" height="1" fill="#888"/><rect x="4" y="5" width="1" height="1" fill="#888"/><rect x="7" y="1" width="1" height="1" fill="#888"/><rect x="7" y="5" width="1" height="1" fill="#888"/><rect x="10" y="1" width="1" height="1" fill="#888"/><rect x="10" y="5" width="1" height="1" fill="#888"/></svg>
<div class="abs t" style="right:431px;top:696.3px;font-size:12px;line-height:14.4px;color:#d0d0d0;text-align:right;">模式</div>
<div class="abs" style="left:2074px;top:695px;width:366px;height:17.7px;background:#222222;border-radius:4px"></div>
<div class="abs t" style="left:2081px;top:696.8px;font-size:12px;line-height:14.4px;color:#e0e0e0;">简单型</div>
<svg class="abs" style="left:2429.5px;top:700.25px;" width="9.0" height="7.5" viewBox="0 0 9.0 7.5"><path d="M1,2 L4.5,5.5 L8.0,2" fill="none" stroke="#ddd" stroke-width="1.3"/></svg>
<div class="abs t" style="right:431px;top:721.6px;font-size:12px;line-height:14.4px;color:#d0d0d0;text-align:right;">厚(宽)度</div>
<div class="abs" style="left:2074px;top:720.3px;width:366px;height:17.7px;background:#4b4b4b;border-radius:4px"></div>
<div class="abs t" style="left:2157.0px;width:200px;top:721.8px;font-size:12px;line-height:14.4px;color:#e6e6e6;text-align:center;">0.2 m</div>
<div class="abs t" style="right:431px;top:746.2px;font-size:12px;line-height:14.4px;color:#d0d0d0;text-align:right;">偏移</div>
<div class="abs" style="left:2074px;top:745.2px;width:366px;height:17.7px;background:#4b4b4b;border-radius:4px"></div>
<div class="abs t" style="left:2157.0px;width:200px;top:746.8px;font-size:12px;line-height:14.4px;color:#e6e6e6;text-align:center;">-1.0000</div>
<div class="abs" style="left:2074px;top:773.3px;width:12px;height:12px;background:#454545;border-radius:3px"></div>
<div class="abs t" style="left:2090px;top:771.8px;font-size:12px;line-height:14.4px;color:#d0d0d0;">均匀厚度</div>
<div class="abs t" style="right:431px;top:796.3px;font-size:12px;line-height:14.4px;color:#d0d0d0;text-align:right;">边缘</div>
<div class="abs" style="left:2074px;top:798px;width:12px;height:12px;background:#4772b3;border-radius:3px"></div>
<svg class="abs" style="left:2074px;top:798px;" width="12" height="12" viewBox="0 0 12 12"><path d="M2.5,6 L5,8.8 L9.5,3" fill="none" stroke="#fff" stroke-width="1.6"/></svg>
<div class="abs t" style="left:2090px;top:796.3px;font-size:12px;line-height:14.4px;color:#e0e0e0;">填充</div>
<div class="abs" style="left:2074px;top:820px;width:12px;height:12px;background:#454545;border-radius:3px"></div>
<div class="abs t" style="left:2090px;top:818.8px;font-size:12px;line-height:14.4px;color:#d0d0d0;">仅边缘</div>
<div class="abs t" style="right:431px;top:854.3px;font-size:12px;line-height:14.4px;color:#d0d0d0;text-align:right;">顶点组</div>
<div class="abs" style="left:2074px;top:853px;width:366px;height:18px;background:#1b1b1b;border-radius:4px"></div>
<div class="abs" style="left:2420px;top:853px;width:20px;height:18px;background:#2a2a2a;border-radius:0 4px 4px 0"></div>
<svg class="abs" style="left:2077px;top:855px;" width="15" height="15" viewBox="0 0 15 15"><rect x="1" y="5" width="4" height="4" fill="#eee"/><rect x="1" y="10" width="4" height="4" fill="#eee"/><rect x="6" y="10" width="4" height="4" fill="#eee"/><rect x="6" y="5" width="4" height="4" fill="#eee"/><rect x="6.5" y="0.5" width="3" height="3" fill="none" stroke="#ccc" stroke-width="0.8"/><rect x="11.5" y="5.5" width="3" height="3" fill="none" stroke="#ccc" stroke-width="0.8"/><rect x="11.5" y="10.5" width="3" height="3" fill="none" stroke="#ccc" stroke-width="0.8"/></svg>
<svg class="abs" style="left:2422px;top:856px;" width="16" height="12" viewBox="0 0 16 12"><path d="M2,6 H14 M2,6 l3,-3 M2,6 l3,3 M14,6 l-3,-3 M14,6 l-3,3" fill="none" stroke="#666" stroke-width="1"/></svg>
<div class="abs t" style="right:431px;top:879.4px;font-size:12px;line-height:14.4px;color:#7a7a7a;text-align:right;">系数</div>
<div class="abs" style="left:2074px;top:878px;width:366px;height:17.7px;background:#3c3c3c;border-radius:4px"></div>
<div class="abs t" style="left:2157.0px;width:200px;top:879.8px;font-size:12px;line-height:14.4px;color:#7f7f7f;text-align:center;">0.000</div>
<div class="abs" style="left:2449.5px;top:701.5px;width:4px;height:4px;background:#e0e0e0;border-radius:50%"></div>
<div class="abs" style="left:2449.5px;top:726.8px;width:4px;height:4px;background:#e0e0e0;border-radius:50%"></div>
<div class="abs" style="left:2449.5px;top:751.4px;width:4px;height:4px;background:#e0e0e0;border-radius:50%"></div>
<div class="abs" style="left:2449.5px;top:776.7px;width:4px;height:4px;background:#e0e0e0;border-radius:50%"></div>
<div class="abs" style="left:2449.5px;top:801.5px;width:4px;height:4px;background:#e0e0e0;border-radius:50%"></div>
<div class="abs" style="left:2449.5px;top:823.8px;width:4px;height:4px;background:#e0e0e0;border-radius:50%"></div>
<div class="abs" style="left:2449.5px;top:884.5px;width:4px;height:4px;background:#555;border-radius:50%"></div>
<svg class="abs" style="left:1836.25px;top:912.5px;" width="7.5" height="9.0" viewBox="0 0 7.5 9.0"><path d="M2,1 L5.5,4.5 L2,8.0" fill="none" stroke="#ccc" stroke-width="1.3"/></svg>
<div class="abs t" style="left:1849px;top:909.8px;font-size:12px;line-height:14.4px;color:#e0e0e0;">法向</div>
<svg class="abs" style="left:1836.25px;top:937.5px;" width="7.5" height="9.0" viewBox="0 0 7.5 9.0"><path d="M2,1 L5.5,4.5 L2,8.0" fill="none" stroke="#ccc" stroke-width="1.3"/></svg>
<div class="abs t" style="left:1849px;top:934.8px;font-size:12px;line-height:14.4px;color:#e0e0e0;">材质</div>
<svg class="abs" style="left:1836.25px;top:962.5px;" width="7.5" height="9.0" viewBox="0 0 7.5 9.0"><path d="M2,1 L5.5,4.5 L2,8.0" fill="none" stroke="#ccc" stroke-width="1.3"/></svg>
<div class="abs t" style="left:1849px;top:959.8px;font-size:12px;line-height:14.4px;color:#e0e0e0;">边数据</div>
<svg class="abs" style="left:1836.25px;top:987.5px;" width="7.5" height="9.0" viewBox="0 0 7.5 9.0"><path d="M2,1 L5.5,4.5 L2,8.0" fill="none" stroke="#ccc" stroke-width="1.3"/></svg>
<div class="abs t" style="left:1849px;top:984.8px;font-size:12px;line-height:14.4px;color:#e0e0e0;">厚度钳制</div>
<svg class="abs" style="left:1836.25px;top:1012.5px;" width="7.5" height="9.0" viewBox="0 0 7.5 9.0"><path d="M2,1 L5.5,4.5 L2,8.0" fill="none" stroke="#ccc" stroke-width="1.3"/></svg>
<div class="abs t" style="left:1849px;top:1009.8px;font-size:12px;line-height:14.4px;color:#e0e0e0;">输出顶点组</div>
</div></body></html>
